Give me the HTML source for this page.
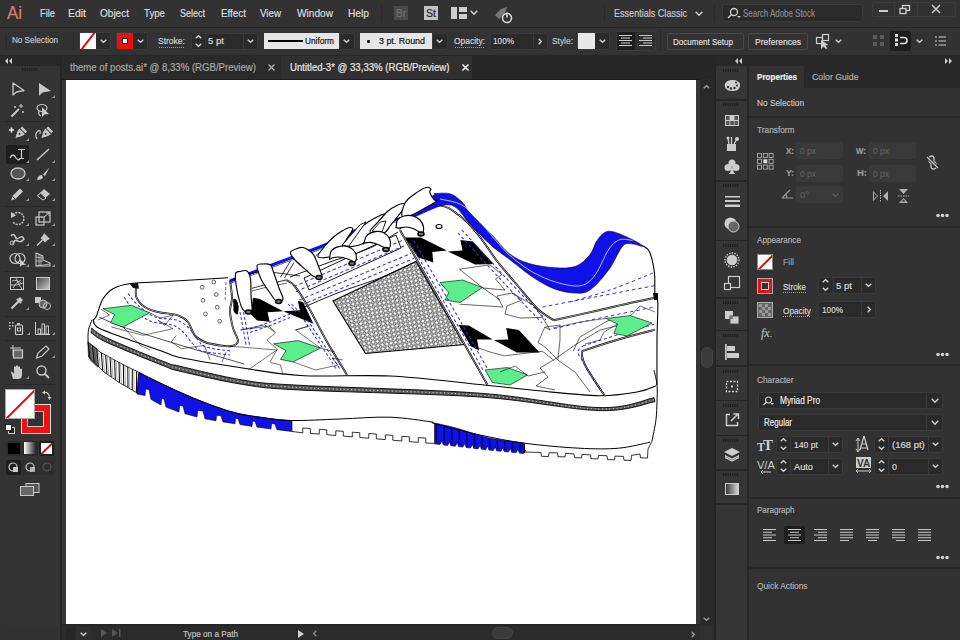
<!DOCTYPE html>
<html><head><meta charset="utf-8">
<style>
*{margin:0;padding:0;box-sizing:border-box}
html,body{width:960px;height:640px;overflow:hidden;background:#323232;font-family:"Liberation Sans",sans-serif;color:#d0d0d0}
.a{position:absolute}
.t{position:absolute;white-space:nowrap;-webkit-text-stroke:0.2px currentColor}
svg{overflow:visible}
</style></head><body>
<div class="a" style="left:0px;top:0px;width:960px;height:27px;background:#323232;"></div>
<div class="a" style="left:0px;top:27px;width:960px;height:1px;background:#262626;"></div>
<div class="t" style="left:7px;top:2.92px;font-size:19px;line-height:19px;color:#d4806a;transform:scaleX(0.888);transform-origin:0 0;">Ai</div>
<div class="t" style="left:40px;top:7.69px;font-size:11px;line-height:11px;color:#dcdcdc;transform:scaleX(0.846);transform-origin:0 0;">File</div>
<div class="t" style="left:68px;top:7.69px;font-size:11px;line-height:11px;color:#dcdcdc;transform:scaleX(0.950);transform-origin:0 0;">Edit</div>
<div class="t" style="left:100px;top:7.69px;font-size:11px;line-height:11px;color:#dcdcdc;transform:scaleX(0.912);transform-origin:0 0;">Object</div>
<div class="t" style="left:144px;top:7.69px;font-size:11px;line-height:11px;color:#dcdcdc;transform:scaleX(0.881);transform-origin:0 0;">Type</div>
<div class="t" style="left:180px;top:7.69px;font-size:11px;line-height:11px;color:#dcdcdc;transform:scaleX(0.818);transform-origin:0 0;">Select</div>
<div class="t" style="left:221px;top:7.69px;font-size:11px;line-height:11px;color:#dcdcdc;transform:scaleX(0.895);transform-origin:0 0;">Effect</div>
<div class="t" style="left:260px;top:7.69px;font-size:11px;line-height:11px;color:#dcdcdc;transform:scaleX(0.888);transform-origin:0 0;">View</div>
<div class="t" style="left:297px;top:7.69px;font-size:11px;line-height:11px;color:#dcdcdc;transform:scaleX(0.920);transform-origin:0 0;">Window</div>
<div class="t" style="left:348px;top:7.69px;font-size:11px;line-height:11px;color:#dcdcdc;transform:scaleX(0.928);transform-origin:0 0;">Help</div>
<div class="a" style="left:381px;top:5px;width:1px;height:17px;background:#2a2a2a;"></div>
<div class="a" style="left:394px;top:6px;width:14px;height:14px;background:#4a4a4a;"></div>
<div class="t" style="left:396px;top:9.04px;font-size:10px;line-height:10px;color:#707070;">Br</div>
<div class="a" style="left:424px;top:6px;width:14px;height:14px;background:#c4c4c4;"></div>
<div class="t" style="left:426px;top:9.04px;font-size:10px;line-height:10px;color:#2a2a2a;transform:scaleX(1.058);transform-origin:0 0;">St</div>
<svg class="a" style="left:451px;top:7px;" width="16" height="12" viewBox="0 0 16 12"><rect x="0" y="0" width="6" height="12" fill="#cfcfcf"/><rect x="8" y="0" width="8" height="5" fill="#cfcfcf"/><rect x="8" y="7" width="8" height="5" fill="#cfcfcf"/></svg>
<svg class="a" style="left:470px;top:10px;" width="8" height="5" viewBox="0 0 8 5"><path d="M0.7 0.7 L4.0 4.3 L7.3 0.7" fill="none" stroke="#cfcfcf" stroke-width="1.4"/></svg>
<svg class="a" style="left:493px;top:4px;" width="20" height="20" viewBox="0 0 20 20"><path d="M2 11 L8 5 L14 3 L12 9 L6 15 Z" fill="#777"/><circle cx="14" cy="14" r="4.5" fill="none" stroke="#d8d8d8" stroke-width="1.6"/><path d="M14 8.5v5" stroke="#d8d8d8" stroke-width="1.6"/></svg>
<div class="a" style="left:604px;top:5px;width:1px;height:17px;background:#2a2a2a;"></div>
<div class="t" style="left:614px;top:7.69px;font-size:11px;line-height:11px;color:#c8c8c8;transform:scaleX(0.824);transform-origin:0 0;">Essentials Classic</div>
<svg class="a" style="left:695px;top:11px;" width="8" height="5" viewBox="0 0 8 5"><path d="M0.7 0.7 L4.0 4.3 L7.3 0.7" fill="none" stroke="#cfcfcf" stroke-width="1.4"/></svg>
<div class="a" style="left:714px;top:5px;width:1px;height:17px;background:#2a2a2a;"></div>
<div class="a" style="left:722px;top:4px;width:141px;height:18px;background:#2a2a2a;border:1px solid #3a3a3a;border-radius:2px;"></div>
<svg class="a" style="left:727px;top:7px;" width="14" height="12" viewBox="0 0 14 12"><circle cx="7" cy="5" r="3.5" fill="none" stroke="#d0d0d0" stroke-width="1.3"/><path d="M4.5 7.5 L1 11" stroke="#d0d0d0" stroke-width="1.5"/><path d="M10 9h4l-2 2z" fill="#d0d0d0"/></svg>
<div class="t" style="left:743px;top:7.69px;font-size:11px;line-height:11px;color:#8a8a8a;transform:scaleX(0.722);transform-origin:0 0;">Search Adobe Stock</div>
<div class="a" style="left:872px;top:2px;width:84px;height:15px;background:#323232;border:1px solid #3c3c3c;border-radius:2px;"></div>
<div class="a" style="left:894px;top:3px;width:1px;height:13px;background:#3c3c3c;"></div>
<div class="a" style="left:917px;top:3px;width:1px;height:13px;background:#3c3c3c;"></div>
<div class="a" style="left:879px;top:10px;width:9px;height:2px;background:#cfcfcf;"></div>
<svg class="a" style="left:899px;top:4px;" width="12" height="11" viewBox="0 0 12 11"><rect x="3.5" y="1.5" width="7" height="5" fill="none" stroke="#cfcfcf" stroke-width="1.3"/><rect x="1" y="4.5" width="6" height="5" fill="#323232" stroke="#cfcfcf" stroke-width="1.3"/></svg>
<svg class="a" style="left:931px;top:4px;" width="11" height="10" viewBox="0 0 11 10"><path d="M1 1L9 9M9 1L1 9" stroke="#cfcfcf" stroke-width="1.5"/></svg>
<div class="a" style="left:0px;top:28px;width:960px;height:27px;background:#323232;"></div>
<div class="a" style="left:0px;top:55px;width:960px;height:1px;background:#262626;"></div>
<div class="a" style="left:5px;top:33px;width:2px;height:16px;background:#2a2a2a;"></div>
<div class="t" style="left:12px;top:35.88px;font-size:9px;line-height:9px;color:#c0c0c0;transform:scaleX(0.901);transform-origin:0 0;">No Selection</div>
<div class="a" style="left:73px;top:32px;width:1px;height:18px;background:#2a2a2a;"></div>
<div class="a" style="left:79px;top:32px;width:32px;height:18px;background:#2b2b2b;border:1px solid #3a3a3a;border-radius:2px;"></div>
<div class="a" style="left:80px;top:33px;width:16px;height:16px;background:#fff;overflow:hidden"><div class="a" style="left:-3px;top:7px;width:22px;height:1.6px;background:#d01010;transform:rotate(-52deg)"></div></div>
<svg class="a" style="left:100px;top:39px;" width="7" height="4" viewBox="0 0 7 4"><path d="M0.7 0.7 L3.5 3.3 L6.3 0.7" fill="none" stroke="#cfcfcf" stroke-width="1.4"/></svg>
<div class="a" style="left:116px;top:32px;width:32px;height:18px;background:#2b2b2b;border:1px solid #3a3a3a;border-radius:2px;"></div>
<div class="a" style="left:117px;top:33px;width:16px;height:16px;background:#e81010;"></div>
<div class="a" style="left:122px;top:38px;width:6px;height:6px;background:#fff;border:1.5px solid #222"></div>
<svg class="a" style="left:137px;top:39px;" width="7" height="4" viewBox="0 0 7 4"><path d="M0.7 0.7 L3.5 3.3 L6.3 0.7" fill="none" stroke="#cfcfcf" stroke-width="1.4"/></svg>
<div class="t" style="left:158px;top:37.21px;font-size:9.2px;line-height:9.2px;color:#d0d0d0;transform:scaleX(0.926);transform-origin:0 0;">Stroke:</div>
<div class="a" style="left:159px;top:47px;width:26px;height:1px;background:;background-image:repeating-linear-gradient(90deg,#9a9a9a 0 1px,transparent 1px 2px)"></div>
<div class="a" style="left:191px;top:33px;width:67px;height:17px;background:#2a2a2a;border:1px solid #3a3a3a;border-radius:2px;"></div>
<div class="a" style="left:205px;top:34px;width:1px;height:15px;background:#3a3a3a;"></div>
<div class="a" style="left:243px;top:34px;width:1px;height:15px;background:#3a3a3a;"></div>
<svg class="a" style="left:195px;top:35px;" width="7" height="4" viewBox="0 0 7 4"><path d="M0.7 3.3 L3.5 0.7 L6.3 3.3" fill="none" stroke="#cfcfcf" stroke-width="1.4"/></svg>
<svg class="a" style="left:195px;top:43px;" width="7" height="4" viewBox="0 0 7 4"><path d="M0.7 0.7 L3.5 3.3 L6.3 0.7" fill="none" stroke="#cfcfcf" stroke-width="1.4"/></svg>
<div class="t" style="left:208px;top:35.96px;font-size:9.5px;line-height:9.5px;color:#d8d8d8;">5 pt</div>
<svg class="a" style="left:247px;top:39px;" width="7" height="4" viewBox="0 0 7 4"><path d="M0.7 0.7 L3.5 3.3 L6.3 0.7" fill="none" stroke="#cfcfcf" stroke-width="1.4"/></svg>
<div class="a" style="left:264px;top:33px;width:75px;height:16px;background:#e6e6e6;"></div>
<div class="a" style="left:268px;top:40px;width:35px;height:2px;background:#000;"></div>
<div class="t" style="left:305px;top:36.46px;font-size:9.5px;line-height:9.5px;color:#111;transform:scaleX(0.872);transform-origin:0 0;">Uniform</div>
<div class="a" style="left:339px;top:33px;width:16px;height:17px;background:#2a2a2a;border:1px solid #3a3a3a;border-radius:2px;"></div>
<svg class="a" style="left:343px;top:39px;" width="7" height="4" viewBox="0 0 7 4"><path d="M0.7 0.7 L3.5 3.3 L6.3 0.7" fill="none" stroke="#cfcfcf" stroke-width="1.4"/></svg>
<div class="a" style="left:360px;top:33px;width:72px;height:16px;background:#e6e6e6;"></div>
<div class="a" style="left:367px;top:40px;width:2.5px;height:2.5px;background:#111;border-radius:50%"></div>
<div class="t" style="left:379px;top:36.46px;font-size:9.5px;line-height:9.5px;color:#111;transform:scaleX(0.936);transform-origin:0 0;">3 pt. Round</div>
<div class="a" style="left:432px;top:33px;width:16px;height:17px;background:#2a2a2a;border:1px solid #3a3a3a;border-radius:2px;"></div>
<svg class="a" style="left:436px;top:39px;" width="7" height="4" viewBox="0 0 7 4"><path d="M0.7 0.7 L3.5 3.3 L6.3 0.7" fill="none" stroke="#cfcfcf" stroke-width="1.4"/></svg>
<div class="t" style="left:454px;top:37.21px;font-size:9.2px;line-height:9.2px;color:#d0d0d0;transform:scaleX(0.919);transform-origin:0 0;">Opacity:</div>
<div class="a" style="left:455px;top:47px;width:30px;height:1px;background:;background-image:repeating-linear-gradient(90deg,#9a9a9a 0 1px,transparent 1px 2px)"></div>
<div class="a" style="left:490px;top:33px;width:58px;height:17px;background:#2a2a2a;border:1px solid #3a3a3a;border-radius:2px;"></div>
<div class="a" style="left:533px;top:34px;width:1px;height:15px;background:#3a3a3a;"></div>
<div class="t" style="left:493px;top:35.96px;font-size:9.5px;line-height:9.5px;color:#d8d8d8;transform:scaleX(0.864);transform-origin:0 0;">100%</div>
<svg class="a" style="left:538px;top:38px;" width="4" height="7" viewBox="0 0 4 7"><path d="M0.7 0.7 L3.3 3.5 L0.7 6.3" fill="none" stroke="#cfcfcf" stroke-width="1.4"/></svg>
<div class="t" style="left:552px;top:37.21px;font-size:9.2px;line-height:9.2px;color:#c0c0c0;transform:scaleX(0.913);transform-origin:0 0;">Style:</div>
<div class="a" style="left:577px;top:32px;width:33px;height:18px;background:#2a2a2a;border:1px solid #3a3a3a;border-radius:2px;"></div>
<div class="a" style="left:578px;top:33px;width:17px;height:16px;background:#e8e8e8;"></div>
<svg class="a" style="left:599px;top:39px;" width="7" height="4" viewBox="0 0 7 4"><path d="M0.7 0.7 L3.5 3.3 L6.3 0.7" fill="none" stroke="#cfcfcf" stroke-width="1.4"/></svg>
<div class="a" style="left:616px;top:31px;width:40px;height:20px;background:#2e2e2e;border:1px solid #3a3a3a;border-radius:2px;"></div>
<div class="a" style="left:617px;top:32px;width:18px;height:18px;background:#1e1e1e;"></div>
<svg class="a" style="left:619px;top:35px;" width="14" height="12" viewBox="0 0 14 12"><g stroke="#d0d0d0" stroke-width="1"><path d="M0 .5h13M2 3h9M0 5.5h13M2 8h9M0 10.5h13"/></g></svg>
<svg class="a" style="left:639px;top:35px;" width="14" height="12" viewBox="0 0 14 12"><g stroke="#c8c8c8" stroke-width="1"><path d="M0 .5h13M4 3h9M0 5.5h13M4 8h9M0 10.5h13"/></g></svg>
<div class="a" style="left:660px;top:30px;width:1px;height:22px;background:#2a2a2a;"></div>
<div class="a" style="left:667px;top:33px;width:77px;height:17px;background:#323232;border:1px solid #484848;border-radius:2px;"></div>
<div class="t" style="left:673px;top:36.96px;font-size:9.5px;line-height:9.5px;color:#dedede;transform:scaleX(0.848);transform-origin:0 0;">Document Setup</div>
<div class="a" style="left:748px;top:33px;width:60px;height:17px;background:#323232;border:1px solid #484848;border-radius:2px;"></div>
<div class="t" style="left:755px;top:36.96px;font-size:9.5px;line-height:9.5px;color:#dedede;transform:scaleX(0.898);transform-origin:0 0;">Preferences</div>
<svg class="a" style="left:815px;top:33px;" width="17" height="17" viewBox="0 0 17 17"><rect x="1.5" y="4.5" width="6" height="6" fill="none" stroke="#cfcfcf" stroke-width="1.2"/><rect x="7.5" y="1.5" width="6" height="6" fill="none" stroke="#cfcfcf" stroke-width="1.2"/><path d="M6 7 L6 16 L8.5 13.5 L11 16 L12.5 15 L10 12.5 L13.5 12 Z" fill="#cfcfcf"/></svg>
<svg class="a" style="left:835px;top:39px;" width="7" height="4" viewBox="0 0 7 4"><path d="M0.7 0.7 L3.5 3.3 L6.3 0.7" fill="none" stroke="#cfcfcf" stroke-width="1.4"/></svg>
<svg class="a" style="left:873px;top:35px;" width="12" height="12" viewBox="0 0 12 12"><g fill="#5a5a5a"><rect x="0" y="0" width="4" height="4"/><rect x="7" y="0" width="4" height="4"/><rect x="0" y="7" width="4" height="4"/><rect x="7" y="7" width="4" height="4"/></g></svg>
<div class="a" style="left:890px;top:31px;width:21px;height:20px;background:#1e1e1e;border-radius:2px"></div>
<svg class="a" style="left:895px;top:34px;" width="14" height="14" viewBox="0 0 14 14"><rect x="0" y="0" width="3" height="3" fill="#e0e0e0"/><rect x="0" y="4.5" width="3" height="3" fill="#e0e0e0"/><rect x="0" y="9" width="3" height="3" fill="#e0e0e0"/><path d="M5 3.5h4a3 3 0 0 1 0 6h-4" fill="none" stroke="#e0e0e0" stroke-width="1.6"/></svg>
<svg class="a" style="left:916px;top:39px;" width="7" height="4" viewBox="0 0 7 4"><path d="M0.7 0.7 L3.5 3.3 L6.3 0.7" fill="none" stroke="#cfcfcf" stroke-width="1.4"/></svg>
<svg class="a" style="left:935px;top:36px;" width="11" height="10" viewBox="0 0 11 10"><g stroke="#cfcfcf" stroke-width="1.2"><path d="M0 1h2M3.5 1h7.5M0 5h2M3.5 5h7.5M0 9h2M3.5 9h7.5"/></g></svg>
<div class="a" style="left:0px;top:56px;width:60px;height:10px;background:#282828;"></div>
<div class="a" style="left:0px;top:66px;width:60px;height:574px;background:#323232;"></div>
<div class="a" style="left:60px;top:56px;width:2px;height:584px;background:#262626;"></div>
<div class="a" style="left:62px;top:56px;width:652px;height:23px;background:#262626;"></div>
<div class="a" style="left:62px;top:56px;width:219px;height:23px;background:#2a2a2a;"></div>
<div class="a" style="left:281px;top:56px;width:191px;height:23px;background:#323232;"></div>
<div class="a" style="left:62px;top:79px;width:652px;height:547px;background:#282828;"></div>
<div class="a" style="left:62px;top:79px;width:638px;height:545px;background:#363636;"></div>
<div class="a" style="left:62px;top:79px;width:638px;height:1px;background:#1e1e1e;"></div>
<div class="a" style="left:66px;top:80px;width:630px;height:544px;background:#ffffff;"></div>
<div class="a" style="left:700px;top:79px;width:13px;height:547px;background:#292929;"></div>
<div class="a" style="left:62px;top:626px;width:652px;height:14px;background:#2b2b2b;"></div>
<div class="a" style="left:714px;top:56px;width:246px;height:10px;background:#282828;"></div>
<div class="a" style="left:714px;top:66px;width:2px;height:574px;background:#262626;"></div>
<div class="a" style="left:716px;top:66px;width:31px;height:574px;background:#323232;"></div>
<div class="a" style="left:747px;top:66px;width:2px;height:574px;background:#262626;"></div>
<div class="a" style="left:749px;top:66px;width:211px;height:574px;background:#323232;"></div>
<div class="a" style="left:281px;top:56px;width:191px;height:23px;background:#303030;"></div>
<div class="t" style="left:70px;top:63.28px;font-size:10.3px;line-height:10.3px;color:#a8a8a8;transform:scaleX(0.933);transform-origin:0 0;">theme of posts.ai* @ 8,33% (RGB/Preview)</div>
<svg class="a" style="left:268px;top:64px;" width="7" height="7" viewBox="0 0 7 7"><path d="M.5 .5l6 6M6.5 .5l-6 6" stroke="#b0b0b0" stroke-width="1.3"/></svg>
<div class="t" style="left:289.5px;top:63.28px;font-size:10.3px;line-height:10.3px;color:#e8e8e8;transform:scaleX(0.934);transform-origin:0 0;">Untitled-3* @ 33,33% (RGB/Preview)</div>
<svg class="a" style="left:462px;top:64px;" width="7" height="7" viewBox="0 0 7 7"><path d="M.5 .5l6 6M6.5 .5l-6 6" stroke="#f0f0f0" stroke-width="1.6"/></svg>
<svg class="a" style="left:5px;top:58px;" width="7" height="6" viewBox="0 0 7 6"><path d="M3 0L0 3L3 6ZM7 0L4 3L7 6Z" fill="#cfcfcf"/></svg>
<div class="a" style="left:1px;top:66px;width:58px;height:560px;background:#333333;"></div>
<svg class="a" style="left:22px;top:68px;" width="16" height="3" viewBox="0 0 16 3"><g fill="#1e1e1e"><rect x="0.0" y="0" width="1.2" height="3"/><rect x="2.3" y="0" width="1.2" height="3"/><rect x="4.6" y="0" width="1.2" height="3"/><rect x="6.9" y="0" width="1.2" height="3"/><rect x="9.2" y="0" width="1.2" height="3"/><rect x="11.5" y="0" width="1.2" height="3"/><rect x="13.8" y="0" width="1.2" height="3"/></g></svg>
<svg class="a" style="left:12px;top:82px;" width="13" height="15" viewBox="0 0 13 15"><path d="M1 1 L1 13 L4.5 10 L12 8.5 Z" fill="none" stroke="#c8c8c8" stroke-width="1.3" stroke-linejoin="round"/></svg>
<svg class="a" style="left:38px;top:82px;" width="14" height="15" viewBox="0 0 14 15"><path d="M1 1 L1 14 L4.5 10.5 L13 9 Z" fill="#c8c8c8"/></svg>
<svg class="a" style="left:52px;top:95px;" width="3" height="3" viewBox="0 0 3 3"><path d="M3 0V3H0Z" fill="#9a9a9a"/></svg>
<svg class="a" style="left:10px;top:103px;" width="15" height="15" viewBox="0 0 15 15"><path d="M1.5 13.5 L9 6" stroke="#c8c8c8" stroke-width="2"/><path d="M11 1v4M9 3h4M5 3v2M4 4h2M13 8v2M12 9h2" stroke="#c8c8c8" stroke-width="1"/></svg>
<svg class="a" style="left:36px;top:103px;" width="15" height="15" viewBox="0 0 15 15"><ellipse cx="6" cy="5" rx="5" ry="3.5" fill="none" stroke="#c8c8c8" stroke-width="1.2"/><path d="M3 8 q-1 4 2 5" fill="none" stroke="#c8c8c8" stroke-width="1.2"/><path d="M6 4 L6 14 L8.5 11.5 L13 11 Z" fill="#c8c8c8"/></svg>
<div class="a" style="left:5px;top:121px;width:50px;height:1px;background:#282828;"></div>
<svg class="a" style="left:8px;top:126px;" width="19" height="16" viewBox="0 0 19 16"><path d="M1 4h5M3.5 1.5v5" stroke="#e8e8e8" stroke-width="1.6"/><g transform="translate(12 7.5) rotate(45)"><path d="M-3.5 -6.5 h7 v2.5 h-7z" fill="#c8c8c8"/><path d="M-4 -3 h8 l-1 4 l-3 5.5 l-3 -5.5z" fill="#c8c8c8"/><circle cx="0" cy="0.5" r="1" fill="#333"/></g></svg>
<svg class="a" style="left:26px;top:138px;" width="3" height="3" viewBox="0 0 3 3"><path d="M3 0V3H0Z" fill="#9a9a9a"/></svg>
<svg class="a" style="left:34px;top:126px;" width="19" height="16" viewBox="0 0 19 16"><path d="M3 13 q-3 -5 1 -8 q3 -2 2 3" fill="none" stroke="#c8c8c8" stroke-width="1.2"/><g transform="translate(12 7.5) rotate(45)"><path d="M-3.5 -6.5 h7 v2.5 h-7z" fill="#c8c8c8"/><path d="M-4 -3 h8 l-1 4 l-3 5.5 l-3 -5.5z" fill="#c8c8c8"/><circle cx="0" cy="0.5" r="1" fill="#333"/></g></svg>
<div class="a" style="left:6px;top:145px;width:23px;height:19px;background:#1e1e1e;border-radius:2px"></div>
<svg class="a" style="left:9px;top:148px;" width="17" height="13" viewBox="0 0 17 13"><path d="M1 10 q3 -6 6 0 q2 3 4 1" fill="none" stroke="#c8c8c8" stroke-width="1.3"/><path d="M9 1.5h7M12.5 1.5v9M10 10.5h5" stroke="#c8c8c8" stroke-width="1.2"/></svg>
<svg class="a" style="left:26px;top:160px;" width="3" height="3" viewBox="0 0 3 3"><path d="M3 0V3H0Z" fill="#9a9a9a"/></svg>
<svg class="a" style="left:36px;top:148px;" width="14" height="13" viewBox="0 0 14 13"><path d="M1 12 L13 1" stroke="#c8c8c8" stroke-width="1.5"/></svg>
<svg class="a" style="left:52px;top:160px;" width="3" height="3" viewBox="0 0 3 3"><path d="M3 0V3H0Z" fill="#9a9a9a"/></svg>
<svg class="a" style="left:10px;top:167px;" width="16" height="13" viewBox="0 0 16 13"><ellipse cx="8" cy="6.5" rx="7" ry="5.5" fill="#555" stroke="#c8c8c8" stroke-width="1.3"/></svg>
<svg class="a" style="left:26px;top:178px;" width="3" height="3" viewBox="0 0 3 3"><path d="M3 0V3H0Z" fill="#9a9a9a"/></svg>
<svg class="a" style="left:36px;top:167px;" width="15" height="14" viewBox="0 0 15 14"><path d="M13.5 .5 L7 7.5 L9 9 Z" fill="#c8c8c8"/><path d="M6 8 q-4 0 -5 5 q4 0 6 -2 z" fill="#c8c8c8"/></svg>
<svg class="a" style="left:52px;top:178px;" width="3" height="3" viewBox="0 0 3 3"><path d="M3 0V3H0Z" fill="#9a9a9a"/></svg>
<svg class="a" style="left:10px;top:187px;" width="15" height="14" viewBox="0 0 15 14"><path d="M1 13.5 L2.5 9 L10 1.5 L13 4.5 L5.5 12 Z" fill="#c8c8c8"/><path d="M2.5 9.5l3 3" stroke="#333" stroke-width="1"/></svg>
<svg class="a" style="left:26px;top:198px;" width="3" height="3" viewBox="0 0 3 3"><path d="M3 0V3H0Z" fill="#9a9a9a"/></svg>
<svg class="a" style="left:36px;top:187px;" width="15" height="14" viewBox="0 0 15 14"><path d="M1 9 L8 2 L14 7 L7 13 Z" fill="#c8c8c8"/><path d="M1.5 9 L4.5 6 L10 11 L7 13Z" fill="#333" stroke="#c8c8c8" stroke-width="1"/></svg>
<svg class="a" style="left:52px;top:198px;" width="3" height="3" viewBox="0 0 3 3"><path d="M3 0V3H0Z" fill="#9a9a9a"/></svg>
<div class="a" style="left:5px;top:206px;width:50px;height:1px;background:#282828;"></div>
<svg class="a" style="left:10px;top:211px;" width="15" height="15" viewBox="0 0 15 15"><path d="M3 4 A6 6 0 1 1 3 11" fill="none" stroke="#c8c8c8" stroke-width="1.4" stroke-dasharray="2 1"/><path d="M1 1 L6 4.5 L1 7Z" fill="#c8c8c8"/></svg>
<svg class="a" style="left:26px;top:223px;" width="3" height="3" viewBox="0 0 3 3"><path d="M3 0V3H0Z" fill="#9a9a9a"/></svg>
<svg class="a" style="left:35px;top:211px;" width="16" height="15" viewBox="0 0 16 15"><rect x="1" y="6" width="8" height="8" fill="none" stroke="#c8c8c8" stroke-width="1.2"/><rect x="4" y="1" width="11" height="10" fill="none" stroke="#c8c8c8" stroke-width="1.2"/><path d="M9 6L14 2M11 2h3v3" stroke="#c8c8c8" stroke-width="1"/></svg>
<svg class="a" style="left:52px;top:223px;" width="3" height="3" viewBox="0 0 3 3"><path d="M3 0V3H0Z" fill="#9a9a9a"/></svg>
<svg class="a" style="left:9px;top:232px;" width="17" height="14" viewBox="0 0 17 14"><path d="M2 4 q2 -3 4 0 q1 4 4 2 q3 -3 5 1 q-3 4 -6 2 q-4 -2 -5 3" fill="none" stroke="#c8c8c8" stroke-width="1.5"/><circle cx="3" cy="11" r="2" fill="none" stroke="#c8c8c8"/></svg>
<svg class="a" style="left:26px;top:243px;" width="3" height="3" viewBox="0 0 3 3"><path d="M3 0V3H0Z" fill="#9a9a9a"/></svg>
<svg class="a" style="left:36px;top:232px;" width="15" height="14" viewBox="0 0 15 14"><path d="M8 1 L14 7 L11.5 8 L9 10.5 L4.5 6 L7 3.5 Z" fill="#c8c8c8"/><path d="M6.5 8 L1 13.5" stroke="#c8c8c8" stroke-width="1.5"/></svg>
<svg class="a" style="left:52px;top:243px;" width="3" height="3" viewBox="0 0 3 3"><path d="M3 0V3H0Z" fill="#9a9a9a"/></svg>
<svg class="a" style="left:9px;top:252px;" width="18" height="15" viewBox="0 0 18 15"><circle cx="6" cy="6.5" r="5" fill="none" stroke="#c8c8c8" stroke-width="1.2"/><circle cx="11" cy="6.5" r="5" fill="none" stroke="#c8c8c8" stroke-width="1.2"/><path d="M11 7 L11 15 L13 13 L17 13Z" fill="#c8c8c8"/></svg>
<svg class="a" style="left:26px;top:264px;" width="3" height="3" viewBox="0 0 3 3"><path d="M3 0V3H0Z" fill="#9a9a9a"/></svg>
<svg class="a" style="left:35px;top:252px;" width="16" height="15" viewBox="0 0 16 15"><path d="M1 1 L1 14 L15 14 L15 11 L8 8 L8 4 Z" fill="none" stroke="#c8c8c8" stroke-width="1.1"/><path d="M1 5L8 6M1 9L8 9M4 1.5V14M6 3V14M1 14L15 12" stroke="#c8c8c8" stroke-width=".8"/></svg>
<svg class="a" style="left:52px;top:264px;" width="3" height="3" viewBox="0 0 3 3"><path d="M3 0V3H0Z" fill="#9a9a9a"/></svg>
<div class="a" style="left:5px;top:271px;width:50px;height:1px;background:#282828;"></div>
<svg class="a" style="left:10px;top:277px;" width="14" height="13" viewBox="0 0 14 13"><rect x=".5" y=".5" width="13" height="12" fill="none" stroke="#c8c8c8" stroke-width="1"/><path d="M2 4 q5 -2 10 3M3 11 q3 -6 8 -8M6 1 q2 6 6 11M1 8 q5 1 12 -2" fill="none" stroke="#c8c8c8" stroke-width=".9"/></svg>
<svg class="a" style="left:36px;top:277px;" width="14" height="13" viewBox="0 0 14 13"><defs><linearGradient id="gg" x1="0" x2="1" y1="0" y2="1"><stop offset="0" stop-color="#444"/><stop offset="1" stop-color="#ccc"/></linearGradient></defs><rect x=".5" y=".5" width="13" height="12" fill="url(#gg)" stroke="#c8c8c8" stroke-width="1"/></svg>
<svg class="a" style="left:10px;top:296px;" width="14" height="14" viewBox="0 0 14 14"><path d="M1.5 12.5 L9 5 M7 3 L11 7" stroke="#c8c8c8" stroke-width="2.2"/><path d="M10 1 L13 4 L11 6 L8 3Z" fill="#c8c8c8"/></svg>
<svg class="a" style="left:26px;top:307px;" width="3" height="3" viewBox="0 0 3 3"><path d="M3 0V3H0Z" fill="#9a9a9a"/></svg>
<svg class="a" style="left:34px;top:296px;" width="17" height="14" viewBox="0 0 17 14"><rect x="1" y="1" width="6" height="6" fill="#c8c8c8"/><circle cx="9" cy="8" r="4" fill="#666" stroke="#c8c8c8"/><circle cx="13" cy="10" r="3.5" fill="none" stroke="#c8c8c8"/></svg>
<div class="a" style="left:5px;top:316px;width:50px;height:1px;background:#282828;"></div>
<svg class="a" style="left:8px;top:321px;" width="19" height="14" viewBox="0 0 19 14"><g fill="#c8c8c8"><rect x="1" y="1" width="1.5" height="1.5"/><rect x="4" y="1" width="1.5" height="1.5"/><rect x="1" y="4" width="1.5" height="1.5"/><rect x="4" y="4" width="1.5" height="1.5"/><rect x="1" y="7" width="1.5" height="1.5"/></g><rect x="9" y="2" width="3" height="2" fill="#c8c8c8"/><rect x="7.5" y="4" width="7" height="9.5" rx="1" fill="none" stroke="#c8c8c8" stroke-width="1.2"/><rect x="9.5" y="7" width="3" height="3" fill="none" stroke="#c8c8c8"/></svg>
<svg class="a" style="left:27px;top:332px;" width="3" height="3" viewBox="0 0 3 3"><path d="M3 0V3H0Z" fill="#9a9a9a"/></svg>
<svg class="a" style="left:35px;top:321px;" width="16" height="14" viewBox="0 0 16 14"><path d="M.5 1 V13.5 H15" fill="none" stroke="#c8c8c8" stroke-width="1"/><rect x="3" y="8" width="2.5" height="5" fill="none" stroke="#c8c8c8"/><rect x="7" y="3" width="2.5" height="10" fill="none" stroke="#c8c8c8"/><rect x="11" y="5" width="2.5" height="8" fill="none" stroke="#c8c8c8"/></svg>
<svg class="a" style="left:52px;top:332px;" width="3" height="3" viewBox="0 0 3 3"><path d="M3 0V3H0Z" fill="#9a9a9a"/></svg>
<div class="a" style="left:5px;top:340px;width:50px;height:1px;background:#282828;"></div>
<svg class="a" style="left:9px;top:345px;" width="16" height="14" viewBox="0 0 16 14"><path d="M1 3h11M4 0v11" stroke="#c8c8c8" stroke-width="1"/><rect x="4.5" y="5" width="9" height="8" fill="#666" stroke="#c8c8c8" stroke-width="1.2"/></svg>
<svg class="a" style="left:35px;top:345px;" width="16" height="14" viewBox="0 0 16 14"><path d="M1.5 13 L3 8 L11 1 L14 4 L7 11 Z" fill="none" stroke="#c8c8c8" stroke-width="1.2"/></svg>
<svg class="a" style="left:52px;top:355px;" width="3" height="3" viewBox="0 0 3 3"><path d="M3 0V3H0Z" fill="#9a9a9a"/></svg>
<svg class="a" style="left:10px;top:365px;" width="15" height="15" viewBox="0 0 15 15"><path d="M3 14 L1 7 q0-1 1.5 0 L4 9 V2 q1-1.5 2 0 V7 V1 q1-1.5 2 0 V7 V2 q1-1.5 2 0 V8 V4 q1-1 2 0 V10 q0 4 -4 4 Z" fill="#c8c8c8"/></svg>
<svg class="a" style="left:26px;top:376px;" width="3" height="3" viewBox="0 0 3 3"><path d="M3 0V3H0Z" fill="#9a9a9a"/></svg>
<svg class="a" style="left:36px;top:365px;" width="14" height="15" viewBox="0 0 14 15"><circle cx="5.5" cy="5.5" r="4.5" fill="none" stroke="#c8c8c8" stroke-width="1.4"/><path d="M8.5 8.5 L13 13" stroke="#c8c8c8" stroke-width="2"/></svg>
<div class="a" style="left:5px;top:384px;width:50px;height:1px;background:#282828;"></div>
<div class="a" style="left:21px;top:404px;width:30px;height:30px;background:#ee1111;border:1px solid #ddd"></div>
<div class="a" style="left:27px;top:411px;width:17px;height:16px;background:#323232;border:1px solid #ccc"></div>
<div class="a" style="left:5px;top:389px;width:30px;height:30px;background:#fff;border:1px solid #aaa;overflow:hidden"><div class="a" style="left:-6px;top:13px;width:42px;height:2px;background:#d81010;transform:rotate(-45deg)"></div></div>
<svg class="a" style="left:42px;top:390px;" width="10" height="10" viewBox="0 0 10 10"><path d="M1.5 2.5 q6 -1 6 6" fill="none" stroke="#c8c8c8" stroke-width="1.2"/><path d="M0 2.5 L3 0.5 V4.5Z M5.5 7 L9.5 7 L7.5 10Z" fill="#c8c8c8"/></svg>
<svg class="a" style="left:5px;top:424px;" width="11" height="10" viewBox="0 0 11 10"><rect x="3.5" y="3.5" width="6" height="6" fill="#222" stroke="#c8c8c8"/><rect x=".5" y=".5" width="6" height="6" fill="#fff" stroke="#222"/></svg>
<div class="a" style="left:6px;top:441px;width:15px;height:15px;background:#2a2a2a;border-radius:2px"></div>
<div class="a" style="left:7.5px;top:443px;width:12px;height:11px;background:#000;"></div>
<div class="a" style="left:22px;top:441px;width:16px;height:15px;background:#2a2a2a;border-radius:2px"></div>
<svg class="a" style="left:24px;top:442px;" width="12" height="12" viewBox="0 0 12 12"><defs><linearGradient id="g2" x1="0" x2="1"><stop offset="0" stop-color="#fff"/><stop offset="1" stop-color="#222"/></linearGradient></defs><rect x="0" y="0" width="12" height="12" fill="url(#g2)"/></svg>
<div class="a" style="left:39px;top:441px;width:15px;height:15px;background:#1e1e1e;border-radius:2px"></div>
<div class="a" style="left:41px;top:443px;width:11px;height:11px;background:#fff;overflow:hidden"><div class="a" style="left:-3px;top:4.5px;width:17px;height:2px;background:#d81010;transform:rotate(-45deg)"></div></div>
<div class="a" style="left:6px;top:460px;width:15px;height:15px;background:#1e1e1e;border-radius:2px"></div>
<div class="a" style="left:22px;top:460px;width:16px;height:15px;background:#2e2e2e;"></div>
<div class="a" style="left:39px;top:460px;width:15px;height:15px;background:#2e2e2e;"></div>
<svg class="a" style="left:8px;top:462px;" width="11" height="11" viewBox="0 0 11 11"><circle cx="5" cy="5" r="4" fill="none" stroke="#c8c8c8" stroke-width="1.2"/><rect x="5" y="5" width="5" height="5" fill="#c8c8c8"/></svg>
<svg class="a" style="left:25px;top:462px;" width="11" height="11" viewBox="0 0 11 11"><circle cx="5" cy="5" r="4" fill="none" stroke="#c8c8c8" stroke-width="1.2"/><rect x="5" y="5" width="5" height="5" fill="#c8c8c8" opacity=".8"/></svg>
<svg class="a" style="left:42px;top:462px;" width="11" height="11" viewBox="0 0 11 11"><circle cx="5" cy="5" r="4" fill="none" stroke="#555" stroke-width="1.2"/></svg>
<svg class="a" style="left:20px;top:483px;" width="20" height="13" viewBox="0 0 20 13"><rect x="6" y=".5" width="13" height="9" fill="#555" stroke="#c8c8c8"/><rect x=".5" y="3.5" width="13" height="9" fill="#666" stroke="#c8c8c8"/></svg>
<div class="a" style="left:62px;top:624px;width:638px;height:2px;background:#262626;"></div>
<div class="a" style="left:66px;top:627px;width:9px;height:13px;background:#262626;"></div>
<div class="a" style="left:76px;top:627px;width:15px;height:13px;background:#2f2f2f;"></div>
<svg class="a" style="left:80px;top:632px;" width="7" height="4" viewBox="0 0 7 4"><path d="M0.7 0.7 L3.5 3.3 L6.3 0.7" fill="none" stroke="#d0d0d0" stroke-width="1.4"/></svg>
<svg class="a" style="left:101px;top:629px;" width="6" height="8" viewBox="0 0 6 8"><path d="M0 0L6 4L0 8Z" fill="#555"/></svg>
<svg class="a" style="left:112px;top:629px;" width="9" height="8" viewBox="0 0 9 8"><path d="M0 0L6 4L0 8Z" fill="#555"/><rect x="7" y="0" width="1.5" height="8" fill="#555"/></svg>
<div class="a" style="left:126px;top:627px;width:1px;height:13px;background:#262626;"></div>
<div class="t" style="left:183px;top:628.96px;font-size:9.5px;line-height:9.5px;color:#c0c0c0;transform:scaleX(0.861);transform-origin:0 0;">Type on a Path</div>
<div class="a" style="left:296px;top:627px;width:1px;height:13px;background:#262626;"></div>
<svg class="a" style="left:298px;top:630px;" width="6" height="8" viewBox="0 0 6 8"><path d="M0 0L6 4L0 8Z" fill="#d0d0d0"/></svg>
<svg class="a" style="left:313px;top:630px;" width="4" height="7" viewBox="0 0 4 7"><path d="M3.3 0.7 L0.7 3.5 L3.3 6.3" fill="none" stroke="#888" stroke-width="1.4"/></svg>
<div class="a" style="left:492px;top:627px;width:21px;height:12px;background:#3b3b3b;border-radius:6px;border:1px solid #454545"></div>
<svg class="a" style="left:691px;top:631px;" width="4" height="7" viewBox="0 0 4 7"><path d="M0.7 0.7 L3.3 3.5 L0.7 6.3" fill="none" stroke="#999" stroke-width="1.4"/></svg>
<div class="a" style="left:700px;top:626px;width:12px;height:14px;background:#303030;"></div>
<svg class="a" style="left:703px;top:85px;" width="7" height="4" viewBox="0 0 7 4"><path d="M0.7 3.3 L3.5 0.7 L6.3 3.3" fill="none" stroke="#999" stroke-width="1.4"/></svg>
<svg class="a" style="left:703px;top:617px;" width="7" height="4" viewBox="0 0 7 4"><path d="M0.7 0.7 L3.5 3.3 L6.3 0.7" fill="none" stroke="#999" stroke-width="1.4"/></svg>
<div class="a" style="left:701px;top:347px;width:12px;height:21px;background:#3b3b3b;border-radius:6px;border:1px solid #454545"></div>
<svg class="a" style="left:735px;top:58px;" width="7" height="6" viewBox="0 0 7 6"><path d="M3 0L0 3L3 6ZM7 0L4 3L7 6Z" fill="#cfcfcf"/></svg>
<svg class="a" style="left:945px;top:58px;" width="7" height="6" viewBox="0 0 7 6"><path d="M4 0L7 3L4 6ZM0 0L3 3L0 6Z" fill="#cfcfcf"/></svg>
<div class="a" style="left:715px;top:66px;width:1px;height:574px;background:#232323;"></div>
<div class="a" style="left:716px;top:66px;width:31px;height:33px;background:#353535;"></div>
<svg class="a" style="left:723px;top:69px;" width="16" height="3" viewBox="0 0 16 3"><g fill="#1e1e1e"><rect x="0.0" y="0" width="1.2" height="3"/><rect x="2.3" y="0" width="1.2" height="3"/><rect x="4.6" y="0" width="1.2" height="3"/><rect x="6.9" y="0" width="1.2" height="3"/><rect x="9.2" y="0" width="1.2" height="3"/><rect x="11.5" y="0" width="1.2" height="3"/><rect x="13.8" y="0" width="1.2" height="3"/></g></svg>
<div class="a" style="left:716px;top:100px;width:31px;height:80px;background:#353535;"></div>
<svg class="a" style="left:723px;top:103px;" width="16" height="3" viewBox="0 0 16 3"><g fill="#1e1e1e"><rect x="0.0" y="0" width="1.2" height="3"/><rect x="2.3" y="0" width="1.2" height="3"/><rect x="4.6" y="0" width="1.2" height="3"/><rect x="6.9" y="0" width="1.2" height="3"/><rect x="9.2" y="0" width="1.2" height="3"/><rect x="11.5" y="0" width="1.2" height="3"/><rect x="13.8" y="0" width="1.2" height="3"/></g></svg>
<div class="a" style="left:716px;top:181px;width:31px;height:58.5px;background:#353535;"></div>
<svg class="a" style="left:723px;top:184px;" width="16" height="3" viewBox="0 0 16 3"><g fill="#1e1e1e"><rect x="0.0" y="0" width="1.2" height="3"/><rect x="2.3" y="0" width="1.2" height="3"/><rect x="4.6" y="0" width="1.2" height="3"/><rect x="6.9" y="0" width="1.2" height="3"/><rect x="9.2" y="0" width="1.2" height="3"/><rect x="11.5" y="0" width="1.2" height="3"/><rect x="13.8" y="0" width="1.2" height="3"/></g></svg>
<div class="a" style="left:716px;top:241px;width:31px;height:56px;background:#353535;"></div>
<svg class="a" style="left:723px;top:244px;" width="16" height="3" viewBox="0 0 16 3"><g fill="#1e1e1e"><rect x="0.0" y="0" width="1.2" height="3"/><rect x="2.3" y="0" width="1.2" height="3"/><rect x="4.6" y="0" width="1.2" height="3"/><rect x="6.9" y="0" width="1.2" height="3"/><rect x="9.2" y="0" width="1.2" height="3"/><rect x="11.5" y="0" width="1.2" height="3"/><rect x="13.8" y="0" width="1.2" height="3"/></g></svg>
<div class="a" style="left:716px;top:298px;width:31px;height:31.5px;background:#353535;"></div>
<svg class="a" style="left:723px;top:301px;" width="16" height="3" viewBox="0 0 16 3"><g fill="#1e1e1e"><rect x="0.0" y="0" width="1.2" height="3"/><rect x="2.3" y="0" width="1.2" height="3"/><rect x="4.6" y="0" width="1.2" height="3"/><rect x="6.9" y="0" width="1.2" height="3"/><rect x="9.2" y="0" width="1.2" height="3"/><rect x="11.5" y="0" width="1.2" height="3"/><rect x="13.8" y="0" width="1.2" height="3"/></g></svg>
<div class="a" style="left:716px;top:331px;width:31px;height:34px;background:#353535;"></div>
<svg class="a" style="left:723px;top:334px;" width="16" height="3" viewBox="0 0 16 3"><g fill="#1e1e1e"><rect x="0.0" y="0" width="1.2" height="3"/><rect x="2.3" y="0" width="1.2" height="3"/><rect x="4.6" y="0" width="1.2" height="3"/><rect x="6.9" y="0" width="1.2" height="3"/><rect x="9.2" y="0" width="1.2" height="3"/><rect x="11.5" y="0" width="1.2" height="3"/><rect x="13.8" y="0" width="1.2" height="3"/></g></svg>
<div class="a" style="left:716px;top:367px;width:31px;height:32.69999999999999px;background:#353535;"></div>
<svg class="a" style="left:723px;top:370px;" width="16" height="3" viewBox="0 0 16 3"><g fill="#1e1e1e"><rect x="0.0" y="0" width="1.2" height="3"/><rect x="2.3" y="0" width="1.2" height="3"/><rect x="4.6" y="0" width="1.2" height="3"/><rect x="6.9" y="0" width="1.2" height="3"/><rect x="9.2" y="0" width="1.2" height="3"/><rect x="11.5" y="0" width="1.2" height="3"/><rect x="13.8" y="0" width="1.2" height="3"/></g></svg>
<div class="a" style="left:716px;top:401px;width:31px;height:33.60000000000002px;background:#353535;"></div>
<svg class="a" style="left:723px;top:404px;" width="16" height="3" viewBox="0 0 16 3"><g fill="#1e1e1e"><rect x="0.0" y="0" width="1.2" height="3"/><rect x="2.3" y="0" width="1.2" height="3"/><rect x="4.6" y="0" width="1.2" height="3"/><rect x="6.9" y="0" width="1.2" height="3"/><rect x="9.2" y="0" width="1.2" height="3"/><rect x="11.5" y="0" width="1.2" height="3"/><rect x="13.8" y="0" width="1.2" height="3"/></g></svg>
<div class="a" style="left:716px;top:436px;width:31px;height:33px;background:#353535;"></div>
<svg class="a" style="left:723px;top:439px;" width="16" height="3" viewBox="0 0 16 3"><g fill="#1e1e1e"><rect x="0.0" y="0" width="1.2" height="3"/><rect x="2.3" y="0" width="1.2" height="3"/><rect x="4.6" y="0" width="1.2" height="3"/><rect x="6.9" y="0" width="1.2" height="3"/><rect x="9.2" y="0" width="1.2" height="3"/><rect x="11.5" y="0" width="1.2" height="3"/><rect x="13.8" y="0" width="1.2" height="3"/></g></svg>
<div class="a" style="left:716px;top:470px;width:31px;height:33px;background:#353535;"></div>
<svg class="a" style="left:723px;top:473px;" width="16" height="3" viewBox="0 0 16 3"><g fill="#1e1e1e"><rect x="0.0" y="0" width="1.2" height="3"/><rect x="2.3" y="0" width="1.2" height="3"/><rect x="4.6" y="0" width="1.2" height="3"/><rect x="6.9" y="0" width="1.2" height="3"/><rect x="9.2" y="0" width="1.2" height="3"/><rect x="11.5" y="0" width="1.2" height="3"/><rect x="13.8" y="0" width="1.2" height="3"/></g></svg>
<div class="a" style="left:716px;top:505px;width:31px;height:135px;background:#353535;"></div>
<div class="a" style="left:716px;top:99px;width:31px;height:1.5px;background:#262626;"></div>
<div class="a" style="left:716px;top:180px;width:31px;height:1.5px;background:#262626;"></div>
<div class="a" style="left:716px;top:239.5px;width:31px;height:1.5px;background:#262626;"></div>
<div class="a" style="left:716px;top:297px;width:31px;height:1.5px;background:#262626;"></div>
<div class="a" style="left:716px;top:329.5px;width:31px;height:1.5px;background:#262626;"></div>
<div class="a" style="left:716px;top:365px;width:31px;height:1.5px;background:#262626;"></div>
<div class="a" style="left:716px;top:399.7px;width:31px;height:1.5px;background:#262626;"></div>
<div class="a" style="left:716px;top:434.6px;width:31px;height:1.5px;background:#262626;"></div>
<div class="a" style="left:716px;top:469px;width:31px;height:1.5px;background:#262626;"></div>
<div class="a" style="left:716px;top:503px;width:31px;height:1.5px;background:#262626;"></div>
<svg class="a" style="left:724px;top:79px;" width="17" height="13" viewBox="0 0 17 13"><path d="M8 1 C2 1 0 5 1 8 C2 11 5 12 9 12 C14 12 16 9 16 6 C16 3 13 1 8 1Z" fill="#cdcdcd"/><g fill="#333"><circle cx="4" cy="8" r="1.2"/><circle cx="7" cy="9.5" r="1.2"/><circle cx="10.5" cy="9" r="1.2"/><circle cx="13" cy="6.5" r="1.1"/><circle cx="12" cy="3.5" r="1"/></g></svg>
<svg class="a" style="left:725px;top:115px;" width="14" height="11" viewBox="0 0 14 11"><rect x="0" y="0" width="14" height="11" fill="#cdcdcd"/><g fill="#555"><rect x="1" y="1" width="3.5" height="4"/><rect x="9.5" y="1" width="3.5" height="4"/><rect x="1" y="6" width="3.5" height="4"/><rect x="5.3" y="6" width="3.5" height="4"/><rect x="9.5" y="6" width="3.5" height="4"/></g></svg>
<svg class="a" style="left:725px;top:136px;" width="15" height="15" viewBox="0 0 15 15"><rect x="2" y="8" width="9" height="7" fill="#cdcdcd"/><path d="M4 8L3 2M6.5 8V1M9 8L12 3" stroke="#cdcdcd" stroke-width="1.3"/><circle cx="3" cy="2" r="1.5" fill="#cdcdcd"/><circle cx="12" cy="3" r="2" fill="#cdcdcd"/></svg>
<svg class="a" style="left:724px;top:159px;" width="16" height="15" viewBox="0 0 16 15"><circle cx="8" cy="4" r="3.5" fill="#cdcdcd"/><circle cx="4" cy="8.5" r="3.5" fill="#cdcdcd"/><circle cx="12" cy="8.5" r="3.5" fill="#cdcdcd"/><path d="M8 6L6 14H10Z" fill="#cdcdcd"/><path d="M5 14.5h6" stroke="#cdcdcd"/></svg>
<svg class="a" style="left:724.5px;top:196px;" width="15" height="11" viewBox="0 0 15 11"><rect x="0" y="0" width="15" height="1.5" fill="#cdcdcd"/><rect x="0" y="4" width="15" height="2" fill="#cdcdcd"/><rect x="0" y="8.5" width="15" height="2.5" fill="#cdcdcd"/></svg>
<svg class="a" style="left:724px;top:217px;" width="16" height="16" viewBox="0 0 16 16"><circle cx="6.5" cy="6.5" r="6" fill="#cdcdcd"/><circle cx="9.5" cy="9.5" r="5.5" fill="#666" stroke="#cdcdcd" stroke-width="1"/></svg>
<svg class="a" style="left:724px;top:252px;" width="16" height="16" viewBox="0 0 16 16"><circle cx="8" cy="8" r="7" fill="none" stroke="#cdcdcd" stroke-width="1.3" stroke-dasharray="1.5 1.2"/><circle cx="8" cy="8" r="5.3" fill="#cdcdcd"/></svg>
<svg class="a" style="left:724px;top:276px;" width="16" height="15" viewBox="0 0 16 15"><rect x="4.5" y=".5" width="11" height="11" fill="none" stroke="#cdcdcd" stroke-width="1.2"/><rect x=".5" y="7.5" width="6" height="6" fill="#353535" stroke="#cdcdcd" stroke-width="1.2"/></svg>
<svg class="a" style="left:724px;top:310px;" width="16" height="15" viewBox="0 0 16 15"><rect x="1" y="1" width="8" height="8" fill="#cdcdcd"/><rect x="6" y="6" width="9" height="8" fill="#cdcdcd" stroke="#444" stroke-width="1"/><rect x="6" y="6" width="3" height="3" fill="#777"/></svg>
<svg class="a" style="left:724px;top:344px;" width="16" height="16" viewBox="0 0 16 16"><rect x="1" y="0" width="1.6" height="16" fill="#cdcdcd"/><rect x="3" y="2" width="8" height="5" fill="#cdcdcd"/><rect x="3" y="9" width="12" height="5" fill="#cdcdcd"/></svg>
<svg class="a" style="left:725px;top:380px;" width="14" height="13" viewBox="0 0 14 13"><rect x="1.5" y="1.5" width="11" height="10" fill="none" stroke="#cdcdcd" stroke-width="1.3" stroke-dasharray="2 1.5"/><rect x="6" y="5.5" width="2" height="2" fill="#cdcdcd"/></svg>
<svg class="a" style="left:725px;top:413px;" width="15" height="14" viewBox="0 0 15 14"><path d="M5 1.5H1.5V12.5H12.5V9" fill="none" stroke="#cdcdcd" stroke-width="1.5"/><path d="M6 8L13 1M8.5 1H13.5V6" fill="none" stroke="#cdcdcd" stroke-width="1.5"/></svg>
<svg class="a" style="left:724px;top:448px;" width="16" height="14" viewBox="0 0 16 14"><path d="M8 0L16 4L8 8L0 4Z" fill="#cdcdcd"/><path d="M1 7L8 10.5L15 7V8.5L8 12L1 8.5Z" fill="#cdcdcd"/><path d="M1 9.5L8 13L15 9.5" fill="none" stroke="#cdcdcd" stroke-width="1.3"/></svg>
<svg class="a" style="left:725px;top:483px;" width="14" height="12" viewBox="0 0 14 12"><defs><linearGradient id="g3" x1="0" x2="1"><stop offset="0" stop-color="#333"/><stop offset="1" stop-color="#ddd"/></linearGradient></defs><rect x=".5" y=".5" width="13" height="11" fill="url(#g3)" stroke="#cdcdcd" stroke-width="1"/></svg>
<div class="a" style="left:749px;top:66px;width:211px;height:22px;background:#282828;"></div>
<div class="a" style="left:749px;top:66px;width:55px;height:22px;background:#323232;"></div>
<div class="a" style="left:804px;top:66px;width:1px;height:22px;background:#262626;"></div>
<div class="a" style="left:866px;top:66px;width:1px;height:22px;background:#262626;"></div>
<div class="t" style="left:757px;top:72.20px;font-size:9.8px;line-height:9.8px;color:#f0f0f0;font-weight:bold;transform:scaleX(0.825);transform-origin:0 0;">Properties</div>
<div class="t" style="left:811.5px;top:72.20px;font-size:9.8px;line-height:9.8px;color:#b0b0b0;transform:scaleX(0.889);transform-origin:0 0;">Color Guide</div>
<div class="a" style="left:749px;top:88px;width:211px;height:552px;background:#323232;"></div>
<div class="t" style="left:757px;top:97.70px;font-size:9.8px;line-height:9.8px;color:#c0c0c0;transform:scaleX(0.846);transform-origin:0 0;">No Selection</div>
<div class="a" style="left:749px;top:116px;width:211px;height:1.5px;background:#282828;"></div>
<div class="t" style="left:757px;top:125.20px;font-size:9.8px;line-height:9.8px;color:#b0b0b0;transform:scaleX(0.847);transform-origin:0 0;">Transform</div>
<svg class="a" style="left:757px;top:153px;" width="17" height="17" viewBox="0 0 17 17"><g fill="none" stroke="#aaa" stroke-width=".9"><rect x="0.5" y="0.5" width="4" height="4"/><rect x="0.5" y="6.3" width="4" height="4"/><rect x="0.5" y="12.1" width="4" height="4"/><rect x="6.3" y="0.5" width="4" height="4"/><rect x="6.3" y="12.1" width="4" height="4"/><rect x="12.1" y="0.5" width="4" height="4"/><rect x="12.1" y="6.3" width="4" height="4"/><rect x="12.1" y="12.1" width="4" height="4"/></g><rect x="6.3" y="6.3" width="4" height="4" fill="#ddd"/></svg>
<div class="t" style="left:786px;top:147.38px;font-size:9px;line-height:9px;color:#9a9a9a;font-weight:bold;transform:scaleX(0.889);transform-origin:0 0;">X:</div>
<div class="t" style="left:786px;top:169.38px;font-size:9px;line-height:9px;color:#9a9a9a;font-weight:bold;transform:scaleX(0.960);transform-origin:0 0;">Y:</div>
<div class="t" style="left:856px;top:147.38px;font-size:9px;line-height:9px;color:#9a9a9a;font-weight:bold;transform:scaleX(0.883);transform-origin:0 0;">W:</div>
<div class="t" style="left:857px;top:169.38px;font-size:9px;line-height:9px;color:#9a9a9a;font-weight:bold;transform:scaleX(1.053);transform-origin:0 0;">H:</div>
<div class="a" style="left:796px;top:142px;width:47px;height:17px;background:#393939;border-radius:2px"></div>
<div class="t" style="left:800px;top:146.46px;font-size:9.5px;line-height:9.5px;color:#5e5e5e;transform:scaleX(0.891);transform-origin:0 0;">0 px</div>
<div class="a" style="left:796px;top:165px;width:47px;height:17px;background:#393939;border-radius:2px"></div>
<div class="t" style="left:800px;top:169.46px;font-size:9.5px;line-height:9.5px;color:#5e5e5e;transform:scaleX(0.891);transform-origin:0 0;">0 px</div>
<div class="a" style="left:869px;top:142px;width:47px;height:17px;background:#393939;border-radius:2px"></div>
<div class="t" style="left:873px;top:146.46px;font-size:9.5px;line-height:9.5px;color:#5e5e5e;transform:scaleX(0.891);transform-origin:0 0;">0 px</div>
<div class="a" style="left:869px;top:165px;width:47px;height:17px;background:#393939;border-radius:2px"></div>
<div class="t" style="left:873px;top:169.46px;font-size:9.5px;line-height:9.5px;color:#5e5e5e;transform:scaleX(0.891);transform-origin:0 0;">0 px</div>
<div class="a" style="left:796px;top:186px;width:47px;height:17px;background:#393939;border-radius:2px"></div>
<div class="t" style="left:800px;top:190.46px;font-size:9.5px;line-height:9.5px;color:#5e5e5e;">0°</div>
<svg class="a" style="left:832px;top:193px;" width="7" height="4" viewBox="0 0 7 4"><path d="M0.7 0.7 L3.5 3.3 L6.3 0.7" fill="none" stroke="#5a5a5a" stroke-width="1.4"/></svg>
<svg class="a" style="left:781px;top:188px;" width="13" height="11" viewBox="0 0 13 11"><path d="M1 10H12M1 10L9 2M6 10 q0-2.5 -2-4" fill="none" stroke="#9a9a9a" stroke-width="1.2"/></svg>
<svg class="a" style="left:926px;top:155px;" width="13" height="15" viewBox="0 0 13 15"><rect x="3" y="1" width="5" height="7" rx="2.5" fill="none" stroke="#c0c0c0" stroke-width="1.3"/><rect x="5" y="7" width="5" height="7" rx="2.5" fill="none" stroke="#c0c0c0" stroke-width="1.3"/><path d="M1 2L12 13" stroke="#323232" stroke-width="3"/><path d="M1 2L12 13" stroke="#c0c0c0" stroke-width="1.2"/></svg>
<svg class="a" style="left:873px;top:190px;" width="15" height="12" viewBox="0 0 15 12"><path d="M0 1V11L5 6Z M15 1V11L10 6Z" fill="#b0b0b0"/><path d="M7.5 0V12" stroke="#b0b0b0" stroke-width="1" stroke-dasharray="1.5 1"/><path d="M1 3V9L4 6Z" fill="#323232"/></svg>
<svg class="a" style="left:898px;top:189px;" width="11" height="14" viewBox="0 0 11 14"><path d="M1 0H10L5.5 5Z M1 14H10L5.5 9Z" fill="#b0b0b0"/><path d="M0 7H11" stroke="#b0b0b0" stroke-width="1" stroke-dasharray="1.5 1"/><path d="M3.5 12.5H7.5L5.5 10.5Z" fill="#323232"/></svg>
<svg class="a" style="left:936px;top:212.5px;" width="13" height="5" viewBox="0 0 13 5"><g fill="#d0d0d0"><circle cx="2" cy="2.5" r="1.8"/><circle cx="6.5" cy="2.5" r="1.8"/><circle cx="11" cy="2.5" r="1.8"/></g></svg>
<div class="a" style="left:749px;top:226px;width:211px;height:1.5px;background:#282828;"></div>
<div class="t" style="left:757px;top:234.70px;font-size:9.8px;line-height:9.8px;color:#b0b0b0;transform:scaleX(0.832);transform-origin:0 0;">Appearance</div>
<div class="a" style="left:757px;top:254px;width:16px;height:16px;background:#fff;border:1px solid #888;overflow:hidden"><div class="a" style="left:-4px;top:6.5px;width:22px;height:1.6px;background:#d01010;transform:rotate(-45deg)"></div></div>
<div class="t" style="left:783px;top:256.70px;font-size:9.8px;line-height:9.8px;color:#9a9a9a;transform:scaleX(0.879);transform-origin:0 0;">Fill</div>
<div class="a" style="left:757px;top:278px;width:16px;height:16px;background:#e81010;border:1px solid #aaa"></div>
<div class="a" style="left:761px;top:282px;width:8px;height:8px;background:#323232;border:1.2px solid #ddd"></div>
<div class="t" style="left:783px;top:281.70px;font-size:9.8px;line-height:9.8px;color:#d0d0d0;transform:scaleX(0.812);transform-origin:0 0;">Stroke</div>
<div class="a" style="left:783px;top:292px;width:23px;height:1px;background:;background-image:repeating-linear-gradient(90deg,#9a9a9a 0 1px,transparent 1px 2px)"></div>
<div class="a" style="left:818px;top:277px;width:58px;height:17px;background:#2a2a2a;border:1px solid #3a3a3a;border-radius:2px;"></div>
<div class="a" style="left:833px;top:278px;width:1px;height:15px;background:#3a3a3a;"></div>
<div class="a" style="left:861px;top:278px;width:1px;height:15px;background:#3a3a3a;"></div>
<svg class="a" style="left:822px;top:279px;" width="7" height="4" viewBox="0 0 7 4"><path d="M0.7 3.3 L3.5 0.7 L6.3 3.3" fill="none" stroke="#cfcfcf" stroke-width="1.4"/></svg>
<svg class="a" style="left:822px;top:287px;" width="7" height="4" viewBox="0 0 7 4"><path d="M0.7 0.7 L3.5 3.3 L6.3 0.7" fill="none" stroke="#cfcfcf" stroke-width="1.4"/></svg>
<div class="t" style="left:836px;top:280.96px;font-size:9.5px;line-height:9.5px;color:#d8d8d8;">5 pt</div>
<svg class="a" style="left:865px;top:283px;" width="7" height="4" viewBox="0 0 7 4"><path d="M0.7 0.7 L3.5 3.3 L6.3 0.7" fill="none" stroke="#cfcfcf" stroke-width="1.4"/></svg>
<svg class="a" style="left:757px;top:302px;" width="16" height="16" viewBox="0 0 16 16"><rect x=".5" y=".5" width="15" height="15" fill="#666" stroke="#aaa"/><rect x="2" y="2" width="3" height="3" fill="#999"/><rect x="2" y="8" width="3" height="3" fill="#999"/><rect x="5" y="5" width="3" height="3" fill="#999"/><rect x="5" y="11" width="3" height="3" fill="#999"/><rect x="8" y="2" width="3" height="3" fill="#999"/><rect x="8" y="8" width="3" height="3" fill="#999"/><rect x="11" y="5" width="3" height="3" fill="#999"/><rect x="11" y="11" width="3" height="3" fill="#999"/></svg>
<div class="t" style="left:783px;top:305.70px;font-size:9.8px;line-height:9.8px;color:#d0d0d0;transform:scaleX(0.843);transform-origin:0 0;">Opacity</div>
<div class="a" style="left:783px;top:316px;width:28px;height:1px;background:;background-image:repeating-linear-gradient(90deg,#9a9a9a 0 1px,transparent 1px 2px)"></div>
<div class="a" style="left:818px;top:301px;width:58px;height:17px;background:#2a2a2a;border:1px solid #3a3a3a;border-radius:2px;"></div>
<div class="a" style="left:861px;top:302px;width:1px;height:15px;background:#3a3a3a;"></div>
<div class="t" style="left:821.5px;top:305.46px;font-size:9.5px;line-height:9.5px;color:#d8d8d8;transform:scaleX(0.864);transform-origin:0 0;">100%</div>
<svg class="a" style="left:867px;top:306px;" width="4" height="7" viewBox="0 0 4 7"><path d="M0.7 0.7 L3.3 3.5 L0.7 6.3" fill="none" stroke="#cfcfcf" stroke-width="1.4"/></svg>
<div class="t" style="left:761px;top:327px;font-size:12px;line-height:12px;color:#bbb;font-family:Liberation Serif;font-style:italic">fx<span style="font-style:normal;font-size:9px">.</span></div>
<svg class="a" style="left:936px;top:352.4px;" width="13" height="5" viewBox="0 0 13 5"><g fill="#d0d0d0"><circle cx="2" cy="2.5" r="1.8"/><circle cx="6.5" cy="2.5" r="1.8"/><circle cx="11" cy="2.5" r="1.8"/></g></svg>
<div class="a" style="left:749px;top:364px;width:211px;height:1.5px;background:#282828;"></div>
<div class="t" style="left:757px;top:374.70px;font-size:9.8px;line-height:9.8px;color:#b0b0b0;transform:scaleX(0.848);transform-origin:0 0;">Character</div>
<div class="a" style="left:758px;top:392px;width:185px;height:17px;background:#2a2a2a;border:1px solid #3a3a3a;border-radius:2px;"></div>
<div class="a" style="left:926px;top:393px;width:1px;height:15px;background:#3a3a3a;"></div>
<svg class="a" style="left:931px;top:398px;" width="8" height="5" viewBox="0 0 8 5"><path d="M0.7 0.7 L4.0 4.3 L7.3 0.7" fill="none" stroke="#cfcfcf" stroke-width="1.4"/></svg>
<svg class="a" style="left:762px;top:396px;" width="12" height="9" viewBox="0 0 12 9"><circle cx="6.5" cy="4" r="3" fill="none" stroke="#d0d0d0" stroke-width="1.1"/><path d="M4.5 6 L1.5 9" stroke="#d0d0d0" stroke-width="1.3"/><path d="M8.5 7h3.5l-1.75 2z" fill="#d0d0d0"/></svg>
<div class="t" style="left:780px;top:395.54px;font-size:10px;line-height:10px;color:#e8e8e8;transform:scaleX(0.827);transform-origin:0 0;">Myriad Pro</div>
<div class="a" style="left:758px;top:414px;width:185px;height:17px;background:#2a2a2a;border:1px solid #3a3a3a;border-radius:2px;"></div>
<div class="a" style="left:926px;top:415px;width:1px;height:15px;background:#3a3a3a;"></div>
<svg class="a" style="left:931px;top:420px;" width="8" height="5" viewBox="0 0 8 5"><path d="M0.7 0.7 L4.0 4.3 L7.3 0.7" fill="none" stroke="#cfcfcf" stroke-width="1.4"/></svg>
<div class="t" style="left:763.7px;top:417.54px;font-size:10px;line-height:10px;color:#e8e8e8;transform:scaleX(0.800);transform-origin:0 0;">Regular</div>
<div class="a" style="left:776px;top:436px;width:67px;height:17px;background:#2a2a2a;border:1px solid #3a3a3a;border-radius:2px;"></div>
<div class="a" style="left:790px;top:437px;width:1px;height:15px;background:#3a3a3a;"></div>
<div class="a" style="left:828px;top:437px;width:1px;height:15px;background:#3a3a3a;"></div>
<svg class="a" style="left:779.5px;top:438px;" width="7" height="4" viewBox="0 0 7 4"><path d="M0.7 3.3 L3.5 0.7 L6.3 3.3" fill="none" stroke="#cfcfcf" stroke-width="1.4"/></svg>
<svg class="a" style="left:779.5px;top:446px;" width="7" height="4" viewBox="0 0 7 4"><path d="M0.7 0.7 L3.5 3.3 L6.3 0.7" fill="none" stroke="#cfcfcf" stroke-width="1.4"/></svg>
<svg class="a" style="left:832px;top:442px;" width="7" height="4" viewBox="0 0 7 4"><path d="M0.7 0.7 L3.5 3.3 L6.3 0.7" fill="none" stroke="#cfcfcf" stroke-width="1.4"/></svg>
<div class="t" style="left:794px;top:440.46px;font-size:9.5px;line-height:9.5px;color:#d8d8d8;transform:scaleX(0.909);transform-origin:0 0;">140 pt</div>
<div class="a" style="left:874px;top:436px;width:69px;height:17px;background:#2a2a2a;border:1px solid #3a3a3a;border-radius:2px;"></div>
<div class="a" style="left:888px;top:437px;width:1px;height:15px;background:#3a3a3a;"></div>
<div class="a" style="left:928px;top:437px;width:1px;height:15px;background:#3a3a3a;"></div>
<svg class="a" style="left:877.5px;top:438px;" width="7" height="4" viewBox="0 0 7 4"><path d="M0.7 3.3 L3.5 0.7 L6.3 3.3" fill="none" stroke="#cfcfcf" stroke-width="1.4"/></svg>
<svg class="a" style="left:877.5px;top:446px;" width="7" height="4" viewBox="0 0 7 4"><path d="M0.7 0.7 L3.5 3.3 L6.3 0.7" fill="none" stroke="#cfcfcf" stroke-width="1.4"/></svg>
<svg class="a" style="left:932px;top:442px;" width="7" height="4" viewBox="0 0 7 4"><path d="M0.7 0.7 L3.5 3.3 L6.3 0.7" fill="none" stroke="#cfcfcf" stroke-width="1.4"/></svg>
<div class="t" style="left:892px;top:440.46px;font-size:9.5px;line-height:9.5px;color:#d8d8d8;">(168 pt)</div>
<div class="a" style="left:776px;top:458px;width:67px;height:17px;background:#2a2a2a;border:1px solid #3a3a3a;border-radius:2px;"></div>
<div class="a" style="left:790px;top:459px;width:1px;height:15px;background:#3a3a3a;"></div>
<div class="a" style="left:828px;top:459px;width:1px;height:15px;background:#3a3a3a;"></div>
<svg class="a" style="left:779.5px;top:460px;" width="7" height="4" viewBox="0 0 7 4"><path d="M0.7 3.3 L3.5 0.7 L6.3 3.3" fill="none" stroke="#cfcfcf" stroke-width="1.4"/></svg>
<svg class="a" style="left:779.5px;top:468px;" width="7" height="4" viewBox="0 0 7 4"><path d="M0.7 0.7 L3.5 3.3 L6.3 0.7" fill="none" stroke="#cfcfcf" stroke-width="1.4"/></svg>
<svg class="a" style="left:832px;top:464px;" width="7" height="4" viewBox="0 0 7 4"><path d="M0.7 0.7 L3.5 3.3 L6.3 0.7" fill="none" stroke="#cfcfcf" stroke-width="1.4"/></svg>
<div class="t" style="left:794px;top:462.46px;font-size:9.5px;line-height:9.5px;color:#d8d8d8;transform:scaleX(0.972);transform-origin:0 0;">Auto</div>
<div class="a" style="left:874px;top:458px;width:69px;height:17px;background:#2a2a2a;border:1px solid #3a3a3a;border-radius:2px;"></div>
<div class="a" style="left:888px;top:459px;width:1px;height:15px;background:#3a3a3a;"></div>
<div class="a" style="left:928px;top:459px;width:1px;height:15px;background:#3a3a3a;"></div>
<svg class="a" style="left:877.5px;top:460px;" width="7" height="4" viewBox="0 0 7 4"><path d="M0.7 3.3 L3.5 0.7 L6.3 3.3" fill="none" stroke="#cfcfcf" stroke-width="1.4"/></svg>
<svg class="a" style="left:877.5px;top:468px;" width="7" height="4" viewBox="0 0 7 4"><path d="M0.7 0.7 L3.5 3.3 L6.3 0.7" fill="none" stroke="#cfcfcf" stroke-width="1.4"/></svg>
<svg class="a" style="left:932px;top:464px;" width="7" height="4" viewBox="0 0 7 4"><path d="M0.7 0.7 L3.5 3.3 L6.3 0.7" fill="none" stroke="#cfcfcf" stroke-width="1.4"/></svg>
<div class="t" style="left:892px;top:462.46px;font-size:9.5px;line-height:9.5px;color:#d8d8d8;transform:scaleX(0.946);transform-origin:0 0;">0</div>
<svg class="a" style="left:757px;top:437px;" width="16" height="15" viewBox="0 0 16 15"><text x="0" y="14" font-family="Liberation Serif" font-size="12" font-weight="bold" fill="#ccc">T</text><text x="6" y="13" font-family="Liberation Serif" font-size="15" font-weight="bold" fill="#ccc">T</text></svg>
<svg class="a" style="left:856px;top:435px;" width="15" height="18" viewBox="0 0 15 18"><path d="M8 1 L4 15 M8 1 L12 15 M5 9H11M5 13H11" fill="none" stroke="#ccc" stroke-width="1.2"/><path d="M2 4V16M0 6L2 3L4 6M0 14L2 17L4 14" fill="none" stroke="#ccc" stroke-width="1"/></svg>
<svg class="a" style="left:757px;top:458px;" width="16" height="17" viewBox="0 0 16 17"><text x="0" y="11" font-family="Liberation Sans" font-size="11" fill="#ccc">V/A</text><path d="M4 14H14M6 12L4 14L6 16" fill="none" stroke="#ccc" stroke-width="1"/></svg>
<svg class="a" style="left:856px;top:457px;" width="16" height="18" viewBox="0 0 16 18"><rect x="0" y="0" width="15" height="11" fill="#ccc"/><text x="1" y="10" font-family="Liberation Sans" font-size="10" font-weight="bold" fill="#333">VA</text><path d="M0 14H15M2 12L0 14L2 16M13 12L15 14L13 16" fill="none" stroke="#ccc" stroke-width="1"/></svg>
<svg class="a" style="left:936px;top:484px;" width="13" height="5" viewBox="0 0 13 5"><g fill="#d0d0d0"><circle cx="2" cy="2.5" r="1.8"/><circle cx="6.5" cy="2.5" r="1.8"/><circle cx="11" cy="2.5" r="1.8"/></g></svg>
<div class="a" style="left:749px;top:497px;width:211px;height:1.5px;background:#282828;"></div>
<div class="t" style="left:757px;top:505.20px;font-size:9.8px;line-height:9.8px;color:#b0b0b0;transform:scaleX(0.819);transform-origin:0 0;">Paragraph</div>
<div class="a" style="left:784px;top:526px;width:21px;height:18px;background:#1e1e1e;border-radius:2px"></div>
<svg class="a" style="left:763.0px;top:529px;" width="13" height="12" viewBox="0 0 13 12"><path d="M0 0.50H13M0 3.25H9M0 6.00H13M0 8.75H9M0 11.50H13" stroke="#c8c8c8" stroke-width="1.1"/></svg>
<svg class="a" style="left:788.0px;top:529px;" width="13" height="12" viewBox="0 0 13 12"><path d="M0 0.50H13M2 3.25H11M0 6.00H13M2 8.75H11M0 11.50H13" stroke="#c8c8c8" stroke-width="1.1"/></svg>
<svg class="a" style="left:814.0px;top:529px;" width="13" height="12" viewBox="0 0 13 12"><path d="M0 0.50H13M4 3.25H13M0 6.00H13M4 8.75H13M0 11.50H13" stroke="#c8c8c8" stroke-width="1.1"/></svg>
<svg class="a" style="left:840.0px;top:529px;" width="13" height="12" viewBox="0 0 13 12"><path d="M0 0.50H13M0 3.25H13M0 6.00H13M0 8.75H13M0 11.50H9" stroke="#c8c8c8" stroke-width="1.1"/></svg>
<svg class="a" style="left:866.0px;top:529px;" width="13" height="12" viewBox="0 0 13 12"><path d="M0 0.50H13M0 3.25H13M0 6.00H13M0 8.75H13M2 11.50H11" stroke="#c8c8c8" stroke-width="1.1"/></svg>
<svg class="a" style="left:892.0px;top:529px;" width="13" height="12" viewBox="0 0 13 12"><path d="M0 0.50H13M0 3.25H13M0 6.00H13M0 8.75H13M4 11.50H13" stroke="#c8c8c8" stroke-width="1.1"/></svg>
<svg class="a" style="left:918.0px;top:529px;" width="13" height="12" viewBox="0 0 13 12"><path d="M0 0.50H13M0 3.25H13M0 6.00H13M0 8.75H13M0 11.50H13" stroke="#c8c8c8" stroke-width="1.1"/></svg>
<svg class="a" style="left:936px;top:555px;" width="13" height="5" viewBox="0 0 13 5"><g fill="#d0d0d0"><circle cx="2" cy="2.5" r="1.8"/><circle cx="6.5" cy="2.5" r="1.8"/><circle cx="11" cy="2.5" r="1.8"/></g></svg>
<div class="a" style="left:749px;top:567px;width:211px;height:1.5px;background:#282828;"></div>
<div class="t" style="left:757px;top:580.70px;font-size:9.8px;line-height:9.8px;color:#b0b0b0;transform:scaleX(0.851);transform-origin:0 0;">Quick Actions</div>
<svg class="a" style="left:0;top:0;overflow:hidden" width="960" height="640" viewBox="0 0 960 640"><defs><pattern id="stp" width="4.5" height="40" patternUnits="userSpaceOnUse" patternTransform="rotate(-9)"><rect x="0" y="0" width="1.2" height="40" fill="#000"/><rect x="2.2" y="0" width="1" height="40" fill="#888"/></pattern><pattern id="mesh" width="4.4" height="4.1" patternUnits="userSpaceOnUse" patternTransform="rotate(-10)"><circle cx="2.2" cy="2.05" r="1.5" fill="#d8d8d8" stroke="#1a1a1a" stroke-width=".75"/></pattern><pattern id="bstp" width="3.6" height="40" patternUnits="userSpaceOnUse" patternTransform="rotate(12)"><rect x="0" y="0" width="1.2" height="40" fill="#000" opacity=".5"/></pattern></defs>
<path d="M88.0 342.0 L100.0 352.0 L118.0 362.0 L138.9 372.4 L137.0 392.8 L120.0 383.0 L104.0 372.0 L88.5 357.0Z" fill="#fff" stroke="#000" stroke-width="0.8" />
<path d="M88.0 342.0 L90.0 358.5" fill="none" stroke="#000" stroke-width="1.0" />
<path d="M89.6 343.3 L91.8 360.2" fill="none" stroke="#999" stroke-width="0.8" />
<path d="M92.4 345.7 L94.2 362.5" fill="none" stroke="#000" stroke-width="1.0" />
<path d="M94.0 347.0 L96.0 364.3" fill="none" stroke="#999" stroke-width="0.8" />
<path d="M96.9 349.4 L98.4 366.6" fill="none" stroke="#000" stroke-width="1.0" />
<path d="M98.5 350.7 L100.2 368.4" fill="none" stroke="#999" stroke-width="0.8" />
<path d="M101.3 352.7 L102.7 370.7" fill="none" stroke="#000" stroke-width="1.0" />
<path d="M102.9 353.6 L104.5 372.3" fill="none" stroke="#999" stroke-width="0.8" />
<path d="M105.7 355.2 L106.9 374.0" fill="none" stroke="#000" stroke-width="1.0" />
<path d="M107.3 356.1 L108.7 375.2" fill="none" stroke="#999" stroke-width="0.8" />
<path d="M110.1 357.6 L111.1 376.9" fill="none" stroke="#000" stroke-width="1.0" />
<path d="M111.7 358.5 L112.9 378.1" fill="none" stroke="#999" stroke-width="0.8" />
<path d="M114.6 360.1 L115.3 379.8" fill="none" stroke="#000" stroke-width="1.0" />
<path d="M116.2 361.0 L117.1 381.0" fill="none" stroke="#999" stroke-width="0.8" />
<path d="M119.0 362.5 L119.5 382.7" fill="none" stroke="#000" stroke-width="1.0" />
<path d="M120.6 363.3 L121.3 383.8" fill="none" stroke="#999" stroke-width="0.8" />
<path d="M123.4 364.7 L123.7 385.2" fill="none" stroke="#000" stroke-width="1.0" />
<path d="M125.0 365.5 L125.5 386.2" fill="none" stroke="#999" stroke-width="0.8" />
<path d="M127.8 366.9 L128.0 387.6" fill="none" stroke="#000" stroke-width="1.0" />
<path d="M129.4 367.7 L129.8 388.6" fill="none" stroke="#999" stroke-width="0.8" />
<path d="M132.3 369.1 L132.2 390.0" fill="none" stroke="#000" stroke-width="1.0" />
<path d="M133.9 369.9 L134.0 391.1" fill="none" stroke="#999" stroke-width="0.8" />
<path d="M136.7 371.3 L136.4 392.4" fill="none" stroke="#000" stroke-width="1.0" />
<path d="M138.3 372.1 L138.2 392.8" fill="none" stroke="#999" stroke-width="0.8" />
<path d="M88.0 342.0 L97.0 348.0 L98.0 368.0 L89.5 360.0Z" fill="#000" stroke="none" stroke-width="1" opacity=".55"/>
<path d="M138.9 372.4 C141.8 373.9 149.2 377.8 156.6 381.3 C163.9 384.8 174.2 389.7 183.0 393.6 C191.8 397.5 200.9 401.3 209.7 404.5 C218.5 407.7 227.2 410.8 236.0 413.0 C244.8 415.2 253.5 416.3 262.8 417.6 C272.1 418.9 287.1 420.3 292.0 420.8 L292 431.5 L292.0 431.5 L277.0 429.7 L275.0 424.0 L271.6 423.5 L271.0 429.0 L257.0 427.1 L255.0 421.4 L252.6 420.9 L252.0 426.4 L240.0 424.5 L238.0 418.7 L235.6 418.2 L235.0 423.7 L223.0 421.9 L221.0 415.8 L216.6 415.3 L216.0 420.8 L205.0 418.8 L203.0 411.0 L197.6 410.5 L197.0 417.0 L185.0 413.7 L183.0 406.0 L179.6 405.5 L179.0 412.0 L166.0 407.1 L164.0 398.9 L161.6 398.4 L161.0 404.9 L151.0 399.4 L149.0 389.6 L145.6 389.1 L145.0 395.6 L137.0 394.0 Z" fill="#1010e8" stroke="#000" stroke-width="0.6" />
<path d="M292 431.5 L302.8 432.8 L302.8 428.0 L310.3 428.5 L310.3 433.4 L319.3 434.1 L319.3 429.4 L326.8 429.9 L326.8 434.7 L335.8 435.5 L335.8 430.8 L343.3 431.3 L343.3 436.1 L352.3 436.9 L352.3 432.2 L359.8 432.7 L359.8 437.5 L368.8 438.2 L368.8 433.5 L376.3 434.0 L376.3 438.8 L385.3 439.6 L385.3 434.9 L392.8 435.4 L392.8 440.2 L401.8 441.0 L401.8 436.3 L409.3 436.8 L409.3 441.6 L418.3 442.3 L418.3 437.6 L425.8 438.1 L425.8 443.0 L434.8 443.4 L435 444.4" fill="none" stroke="#000" stroke-width="0.8" />
<path d="M434.5 423.0 C438.1 423.8 449.0 426.1 456.0 428.0 C463.0 429.9 470.6 432.7 476.8 434.5 C482.9 436.3 485.1 437.4 493.0 438.8 C500.9 440.2 519.2 442.5 524.4 443.2 L524.4 453.0 L525.7 449.8 L524.7 451.8 L523.6 453.6 L519.3 453.1 L518.1 449.2 L517.1 451.0 L516.0 452.8 L511.7 452.3 L510.5 448.4 L509.5 450.2 L508.4 452.0 L504.1 451.5 L502.9 447.6 L501.9 449.5 L500.8 451.3 L496.5 450.8 L495.3 446.9 L494.3 448.7 L493.2 450.5 L488.9 450.0 L487.7 446.1 L486.7 447.9 L485.6 449.7 L481.3 449.2 L480.1 445.3 L479.1 447.1 L478.0 448.9 L473.7 448.4 L472.5 444.4 L471.5 446.2 L470.4 448.0 L466.1 447.5 L464.9 443.5 L463.9 445.3 L462.8 447.1 L458.5 446.6 L457.3 442.7 L456.3 444.4 L455.2 446.2 L450.9 445.7 L449.7 441.8 L448.7 443.6 L447.6 445.4 L443.3 444.9 L442.1 440.9 L441.1 442.7 L440.0 444.5 L435.7 444.0 L434.5 443.2 Z" fill="#1010e8" stroke="#000" stroke-width="0.6" />
<path d="M436.3 424.4 L436.8 442.4" fill="none" stroke="#000" stroke-width="1.6" opacity=".55"/>
<path d="M443.9 426.2 L444.4 443.3" fill="none" stroke="#000" stroke-width="1.6" opacity=".55"/>
<path d="M451.5 428.0 L452.0 444.2" fill="none" stroke="#000" stroke-width="1.6" opacity=".55"/>
<path d="M459.1 430.0 L459.6 445.1" fill="none" stroke="#000" stroke-width="1.6" opacity=".55"/>
<path d="M466.7 432.4 L467.2 446.0" fill="none" stroke="#000" stroke-width="1.6" opacity=".55"/>
<path d="M474.3 434.7 L474.8 446.8" fill="none" stroke="#000" stroke-width="1.6" opacity=".55"/>
<path d="M481.9 436.9 L482.4 447.7" fill="none" stroke="#000" stroke-width="1.6" opacity=".55"/>
<path d="M489.5 438.9 L490.0 448.5" fill="none" stroke="#000" stroke-width="1.6" opacity=".55"/>
<path d="M497.1 440.4 L497.6 449.2" fill="none" stroke="#000" stroke-width="1.6" opacity=".55"/>
<path d="M504.7 441.4 L505.2 450.0" fill="none" stroke="#000" stroke-width="1.6" opacity=".55"/>
<path d="M512.3 442.5 L512.8 450.8" fill="none" stroke="#000" stroke-width="1.6" opacity=".55"/>
<path d="M519.9 443.6 L520.4 451.5" fill="none" stroke="#000" stroke-width="1.6" opacity=".55"/>
<path d="M524.5 444 L524.5 452 L541.0 452.5 L541.5 456.3 L548.5 456.5 L549.0 452.7 L557.5 452.9 L558.0 456.7 L565.0 456.9 L565.5 453.3 L574.0 453.9 L574.5 457.7 L581.5 457.9 L582.0 454.4 L590.5 454.9 L591.0 458.7 L598.0 458.9 L598.5 455.4 L607.0 455.8 L607.5 459.6 L614.5 459.8 L615.0 456.1 L623.5 456.4 L624.0 460.2 L631.0 460.4 L631.5 455.4 L640.0 454.0 L640.5 457.8 L647.5 458.0 L648.0 449.0 L652 441" fill="none" stroke="#000" stroke-width="0.8" />
<path d="M138.9 372.4 C141.8 373.9 149.2 377.8 156.6 381.3 C163.9 384.8 174.2 389.7 183.0 393.6 C191.8 397.5 200.9 401.3 209.7 404.5 C218.5 407.7 227.2 410.8 236.0 413.0 C244.8 415.2 253.5 416.4 262.8 417.6 C272.1 418.9 279.1 420.3 292.0 420.5 C304.9 420.7 323.7 419.6 340.0 419.0 C356.3 418.4 374.8 416.7 390.0 417.2 C405.2 417.7 423.5 420.8 431.0 421.9 C438.5 423.0 426.8 421.6 435.0 423.8 C443.2 425.9 465.1 431.8 480.0 435.0 C494.9 438.2 508.0 441.0 524.5 443.2 C541.0 445.4 563.3 447.4 579.0 448.2 C594.7 449.0 606.7 449.2 618.5 448.2 C630.3 447.2 644.8 443.2 650.0 442.2" fill="none" stroke="#000" stroke-width="1" />
<path d="M92.0 320.0 C91.4 321.7 89.2 326.3 88.5 330.0 C87.8 333.7 88.1 340.0 88.0 342.0" fill="none" stroke="#000" stroke-width="1" />
<path d="M91.8 328.0 C94.3 329.7 95.0 332.4 107.0 338.0 C119.0 343.6 151.8 357.0 164.0 361.7 C176.2 366.4 166.9 363.2 180.0 366.2 C193.1 369.3 222.5 376.8 242.5 380.0 C262.5 383.2 260.4 383.1 300.0 385.3 C339.6 387.5 430.2 389.5 480.0 393.2 C529.8 396.9 570.0 406.9 599.0 407.6 C628.0 408.4 644.8 399.4 654.0 397.7 L655.0 401.7 C645.7 403.2 628.2 411.4 599.0 410.6 C569.8 409.8 529.8 400.4 480.0 397.0 C430.2 393.6 339.6 392.1 300.0 390.0 C260.4 387.9 262.5 387.5 242.5 384.4 C222.5 381.3 193.1 374.3 180.0 371.2 C166.9 368.2 176.2 370.8 164.0 366.0 C151.8 361.2 119.2 348.1 107.0 342.5 C94.8 336.9 93.7 334.2 91.0 332.5Z" fill="#5a5a5a" stroke="#000" stroke-width="0.9" />
<path d="M91.4 330.2 C94.0 331.9 94.9 334.6 107.0 340.2 C119.1 345.9 151.8 359.1 164.0 363.9 C176.2 368.6 166.9 365.7 180.0 368.8 C193.1 371.8 222.5 379.1 242.5 382.2 C262.5 385.3 260.4 385.5 300.0 387.6 C339.6 389.8 430.2 391.5 480.0 395.1 C529.8 398.7 569.9 408.3 599.0 409.1 C628.1 409.9 645.2 401.3 654.5 399.7" fill="none" stroke="#eee" stroke-width="0.8" stroke-dasharray="1.2 2.5"/>
<path d="M654.0 370.0 C654.5 372.5 656.5 379.7 657.0 385.0 C657.5 390.3 657.2 395.9 657.0 401.7 C656.8 407.4 656.8 412.9 656.0 419.5 C655.2 426.1 652.7 437.4 652.0 441.0" fill="none" stroke="#000" stroke-width="1" />
<path d="M93.0 319.0 C93.7 320.3 92.7 324.2 97.0 327.0 C101.3 329.8 107.8 331.8 119.0 336.0 C130.2 340.2 153.8 348.4 164.0 352.0 C174.2 355.6 169.0 355.2 180.0 357.5 C191.0 359.8 210.0 363.0 230.0 366.0 C250.0 369.0 273.3 373.8 300.0 375.5 C326.7 377.2 360.0 374.5 390.0 376.0 C420.0 377.5 455.2 382.0 480.0 384.5 C504.8 387.0 519.2 388.9 539.0 390.8 C558.8 392.7 582.5 395.5 599.0 395.7 C615.5 395.9 628.5 393.4 638.0 391.8 C647.5 390.2 653.0 386.8 656.0 385.8" fill="none" stroke="#000" stroke-width="1.1" />
<path d="M99.0 317.0 C103.0 318.7 111.2 322.8 123.0 327.0 C134.8 331.2 149.8 335.8 170.0 342.0 C190.2 348.2 231.7 360.3 244.0 364.0" fill="none" stroke="#000" stroke-width="0.7" />
<path d="M93.5 320.0 C94.0 319.3 95.7 317.7 96.5 316.0 C97.3 314.3 97.4 312.9 98.5 310.0 C99.6 307.1 100.6 302.2 103.0 298.7 C105.4 295.1 108.5 291.2 113.0 288.7 C117.5 286.2 120.0 284.9 129.7 283.7 C139.4 282.4 154.9 282.2 171.3 281.2 C187.7 280.2 218.6 278.4 228.0 277.8" fill="none" stroke="#000" stroke-width="1.1" />
<path d="M136.3 285.3 C136.3 287.2 134.9 293.4 136.3 297.0 C137.7 300.6 141.1 304.5 144.7 307.0 C148.3 309.5 152.4 310.6 158.0 312.0 C163.6 313.4 173.0 313.6 178.0 315.3 C183.0 317.0 185.2 318.7 188.0 322.0 C190.8 325.3 191.9 332.0 194.7 335.3 C197.5 338.6 200.5 340.3 204.7 342.0 C208.9 343.7 215.4 344.8 220.0 345.5 C224.6 346.2 229.0 346.8 232.0 346.0 C235.0 345.2 237.8 344.0 238.0 341.0 C238.2 338.0 234.3 333.0 233.0 328.0 C231.7 323.0 230.2 316.0 230.0 311.0 C229.8 306.0 232.0 303.2 232.0 298.0 C232.0 292.8 230.3 283.0 230.0 280.0" fill="none" stroke="#000" stroke-width="1.9" />
<path d="M136.3 285.3 C136.3 287.2 134.9 293.4 136.3 297.0 C137.7 300.6 141.1 304.5 144.7 307.0 C148.3 309.5 152.4 310.6 158.0 312.0 C163.6 313.4 173.0 313.6 178.0 315.3 C183.0 317.0 185.2 318.7 188.0 322.0 C190.8 325.3 191.9 332.0 194.7 335.3 C197.5 338.6 200.5 340.3 204.7 342.0 C208.9 343.7 215.4 344.8 220.0 345.5 C224.6 346.2 229.0 346.8 232.0 346.0 C235.0 345.2 237.8 344.0 238.0 341.0 C238.2 338.0 234.3 333.0 233.0 328.0 C231.7 323.0 230.2 316.0 230.0 311.0 C229.8 306.0 232.0 303.2 232.0 298.0 C232.0 292.8 230.3 283.0 230.0 280.0" fill="none" stroke="#fff" stroke-width="0.6" />
<path d="M129.7 283.7 L138.0 283.0 L139.0 288.7 L133.0 288.0Z" fill="#111" stroke="none" stroke-width="1" />
<path d="M233.0 299.0 C233.7 299.5 236.1 300.5 237.0 302.0 C237.9 303.5 238.4 306.0 238.4 308.0 C238.4 310.0 237.7 313.3 237.0 314.0 C236.3 314.7 234.5 312.3 234.0 312.0" fill="#000" stroke="none" stroke-width="1" />
<circle cx="202.2" cy="287.3" r="1.9" fill="none" stroke="#333" stroke-width=".75"/>
<circle cx="213.8" cy="282" r="1.9" fill="none" stroke="#333" stroke-width=".75"/>
<circle cx="216.3" cy="294.5" r="1.9" fill="none" stroke="#333" stroke-width=".75"/>
<circle cx="203" cy="300.3" r="1.9" fill="none" stroke="#333" stroke-width=".75"/>
<circle cx="217.2" cy="307.3" r="1.9" fill="none" stroke="#333" stroke-width=".75"/>
<circle cx="205.5" cy="314" r="1.9" fill="none" stroke="#333" stroke-width=".75"/>
<circle cx="219.7" cy="321.2" r="1.9" fill="none" stroke="#333" stroke-width=".75"/>
<path d="M128.0 293.7 C129.7 295.6 133.5 301.4 138.0 305.3 C142.5 309.2 148.7 314.6 155.0 317.0 C161.3 319.4 170.5 318.3 176.0 320.0 C181.5 321.7 184.3 323.7 188.0 327.0 C191.7 330.3 195.0 336.7 198.0 340.0 C201.0 343.3 200.7 345.2 206.0 347.0 C211.3 348.8 226.0 350.3 230.0 351.0" fill="none" stroke="#3535d0" stroke-width="1.05" stroke-dasharray="3 2"/>
<path d="M124.0 297.0 C125.5 299.0 128.7 305.0 133.0 309.0 C137.3 313.0 143.5 318.3 150.0 321.0 C156.5 323.7 166.5 323.2 172.0 325.0 C177.5 326.8 179.5 328.8 183.0 332.0 C186.5 335.2 189.8 340.8 193.0 344.0 C196.2 347.2 195.8 349.2 202.0 351.0 C208.2 352.8 225.3 354.3 230.0 355.0" fill="none" stroke="#3535d0" stroke-width="1.05" stroke-dasharray="3 2"/>
<path d="M226.0 282.0 L225.0 302.0" fill="none" stroke="#333" stroke-width="0.7" stroke-dasharray="3 2"/>
<path d="M103.0 308.7 L131.3 305.3 L149.7 312.8 L123.0 327.0 L110.5 322.8 L114.7 314.5Z" fill="#5cee8a" stroke="#000" stroke-width="0.6" />
<path d="M101.0 309.0 L109.5 315.0 L98.0 320.0" fill="none" stroke="#000" stroke-width="0.55" />
<path d="M111.3 327.0 L143.0 335.3 L173.0 328.7 L158.0 320.3 L164.7 325.3 L173.0 315.3" fill="none" stroke="#000" stroke-width="0.55" />
<path d="M176.3 335.3 L171.3 342.0 L181.3 348.7 L204.7 345.3" fill="none" stroke="#000" stroke-width="0.55" />
<path d="M123.0 327.0 L140.0 345.0 L150.0 350.0" fill="none" stroke="#000" stroke-width="0.55" />
<path d="M149.7 312.8 L160.0 318.0 L173.0 315.3" fill="none" stroke="#000" stroke-width="0.55" />
<path d="M205.0 347.0 L210.0 360.0" fill="none" stroke="#000" stroke-width="0.55" />
<path d="M226.0 352.0 L222.0 362.0" fill="none" stroke="#000" stroke-width="0.55" />
<path d="M230.0 281.0 C238.3 277.8 263.3 268.3 280.0 262.0 C296.7 255.7 316.3 248.7 330.0 243.0 C343.7 237.3 347.7 232.7 362.0 228.0 C376.3 223.3 407.0 217.2 416.0 215.0" fill="none" stroke="#1010e8" stroke-width="3" />
<path d="M230.0 283.5 C238.3 280.3 263.3 270.8 280.0 264.5 C296.7 258.2 316.3 251.2 330.0 245.5 C343.7 239.8 347.7 235.2 362.0 230.5 C376.3 225.8 407.0 219.7 416.0 217.5" fill="none" stroke="#000" stroke-width="0.6" />
<path d="M232.0 280.0 C236.7 278.7 248.7 272.7 260.0 272.0 C271.3 271.3 293.3 275.3 300.0 276.0" fill="none" stroke="#000" stroke-width="0.8" />
<path d="M290.0 277.0 C296.7 274.5 316.7 266.8 330.0 262.0 C343.3 257.2 358.7 253.0 370.0 248.0 C381.3 243.0 393.3 234.7 398.0 232.0" fill="none" stroke="#000" stroke-width="0.9" />
<path d="M302.0 308.0 C308.3 305.3 327.0 297.0 340.0 292.0 C353.0 287.0 367.3 283.1 380.0 278.0 C392.7 272.9 410.0 264.2 416.0 261.5" fill="none" stroke="#000" stroke-width="0.9" />
<path d="M304.0 278.0 L396.0 235.0 L401.0 248.0 L309.0 290.0Z" fill="none" stroke="#000" stroke-width="0.9" />
<path d="M293.9 286.5 L402.8 240.3" fill="none" stroke="#3535d0" stroke-width="1.05" stroke-dasharray="3.5 2.5"/>
<path d="M295.9 291.5 L405.9 245.2" fill="none" stroke="#3535d0" stroke-width="1.05" stroke-dasharray="3.5 2.5"/>
<path d="M299.4 300.0 L411.2 253.4" fill="none" stroke="#3535d0" stroke-width="1.05" stroke-dasharray="3.5 2.5"/>
<path d="M301.5 305.0 L414.3 258.2" fill="none" stroke="#3535d0" stroke-width="1.05" stroke-dasharray="3.5 2.5"/>
<path d="M252.0 288.3 L263.4 285.2 L286.0 280.0" fill="none" stroke="#000" stroke-width="0.8" />
<path d="M252.0 291.0 L263.4 288.0 L287.0 283.0" fill="none" stroke="#000" stroke-width="0.6" />
<path d="M253.0 297.7 L259.2 298.8 L283.2 311.2 L267.6 312.3 L269.7 321.7 L257.2 320.6 L249.9 313.3 L252.0 305.0Z" fill="#000" stroke="none" stroke-width="1" />
<path d="M297.8 300.8 L303.0 301.9 L313.4 323.8 L283.2 311.2 L299.9 310.2Z" fill="#000" stroke="none" stroke-width="1" />
<path d="M234.0 298.8 C234.4 299.0 235.8 298.8 236.5 300.0 C237.2 301.2 238.2 303.6 238.4 306.0 C238.6 308.4 238.3 313.6 237.5 314.4 C236.7 315.2 234.2 311.6 233.5 311.0" fill="#000" stroke="none" stroke-width="1" />
<path d="M240.5 330.0 L264.5 324.8 L275.0 332.0" fill="none" stroke="#000" stroke-width="0.55" />
<path d="M295.7 330.0 L310.3 325.8" fill="none" stroke="#000" stroke-width="0.55" />
<path d="M286.0 280.0 C287.4 281.0 290.7 281.2 294.7 286.2 C298.7 291.2 304.8 301.0 310.0 310.0 C315.2 319.0 319.8 329.2 326.0 340.0 C332.2 350.8 343.5 369.2 347.0 375.0" fill="none" stroke="#000" stroke-width="1.9" />
<path d="M286.0 280.0 C287.4 281.0 290.7 281.2 294.7 286.2 C298.7 291.2 304.8 301.0 310.0 310.0 C315.2 319.0 319.8 329.2 326.0 340.0 C332.2 350.8 343.5 369.2 347.0 375.0" fill="none" stroke="#fff" stroke-width="0.6" />
<path d="M240.0 312.0 C240.5 314.7 242.0 322.5 243.0 328.0 C244.0 333.5 245.5 342.2 246.0 345.0" fill="none" stroke="#3535d0" stroke-width="1.05" stroke-dasharray="3 2"/>
<path d="M250.0 329.0 C253.3 327.8 263.3 324.5 270.0 322.0 C276.7 319.5 286.7 315.3 290.0 314.0" fill="none" stroke="#3535d0" stroke-width="1.05" stroke-dasharray="3 2"/>
<path d="M304.0 320.0 C306.0 323.0 312.0 332.0 316.0 338.0 C320.0 344.0 324.5 350.7 328.0 356.0 C331.5 361.3 335.5 367.7 337.0 370.0" fill="none" stroke="#3535d0" stroke-width="1.05" stroke-dasharray="3 2"/>
<path d="M288.0 304.0 C289.3 305.3 294.7 310.7 296.0 312.0" fill="none" stroke="#3535d0" stroke-width="1.05" stroke-dasharray="3 2"/>
<path d="M243.5 312.0 C244.0 314.7 245.5 322.5 246.5 328.0 C247.5 333.5 249.0 342.2 249.5 345.0" fill="none" stroke="#3535d0" stroke-width="1.05" stroke-dasharray="3 2"/>
<path d="M250.0 332.5 C253.3 331.3 263.3 328.0 270.0 325.5 C276.7 323.0 286.7 318.8 290.0 317.5" fill="none" stroke="#3535d0" stroke-width="1.05" stroke-dasharray="3 2"/>
<path d="M307.5 320.0 C309.5 323.0 315.5 332.0 319.5 338.0 C323.5 344.0 328.0 350.7 331.5 356.0 C335.0 361.3 339.0 367.7 340.5 370.0" fill="none" stroke="#3535d0" stroke-width="1.05" stroke-dasharray="3 2"/>
<path d="M291.5 304.0 C292.8 305.3 298.2 310.7 299.5 312.0" fill="none" stroke="#3535d0" stroke-width="1.05" stroke-dasharray="3 2"/>
<path d="M273.6 343.8 L298.0 340.6 L320.5 348.1 L293.0 361.9 L280.5 359.4 L286.0 350.6Z" fill="#5cee8a" stroke="#000" stroke-width="0.6" />
<path d="M240.5 330.0 L269.0 326.0 L275.5 333.0 L266.8 340.0 L278.0 350.0" fill="none" stroke="#000" stroke-width="0.55" />
<path d="M228.0 346.0 L276.8 350.0 L248.0 370.0" fill="none" stroke="#000" stroke-width="0.55" />
<path d="M270.5 362.5 L280.5 365.0 L283.0 375.0" fill="none" stroke="#000" stroke-width="0.55" />
<path d="M276.8 350.0 L270.0 362.0" fill="none" stroke="#000" stroke-width="0.55" />
<path d="M295.5 330.0 L308.0 326.2" fill="none" stroke="#000" stroke-width="0.55" />
<path d="M295.5 330.0 L320.5 348.1" fill="none" stroke="#000" stroke-width="0.55" />
<path d="M293.0 361.9 L315.5 370.0 L338.0 365.0" fill="none" stroke="#000" stroke-width="0.55" />
<path d="M320.5 348.1 L335.0 352.0" fill="none" stroke="#000" stroke-width="0.55" />
<path d="M338.0 365.0 L332.0 358.0 L343.0 360.0" fill="none" stroke="#000" stroke-width="0.55" />
<path d="M333.0 301.0 C346.8 294.4 402.2 268.1 416.0 261.5 L464 344.5 L365.5 353.5 Z" fill="url(#mesh)" stroke="#000" stroke-width="1.1" />
<path d="M404.2 237.4 L420.8 237.4 L446.9 250.4 L432.3 252.0 L433.3 262.4 L417.7 257.2 L406.2 239.5Z" fill="#000" stroke="none" stroke-width="1" />
<path d="M460.4 240.0 L472.9 241.5 L493.8 264.0 L475.0 264.5 L447.9 251.4 L462.5 250.4Z" fill="#000" stroke="none" stroke-width="1" />
<path d="M458.3 324.9 L468.8 325.4 L492.7 339.5 L477.0 339.5 L479.2 350.4 L470.8 346.2 L459.4 326.5Z" fill="#000" stroke="none" stroke-width="1" />
<path d="M506.2 328.0 L518.8 330.0 L539.6 352.5 L516.7 352.5 L493.8 340.0 L508.3 339.5Z" fill="#000" stroke="none" stroke-width="1" />
<path d="M440.0 282.5 L462.5 280.0 L482.5 287.5 L460.0 302.5 L445.0 300.0 L448.8 292.5Z" fill="#5cee8a" stroke="#000" stroke-width="0.6" />
<path d="M485.0 370.0 L507.5 367.5 L527.5 375.0 L510.0 385.0 L492.5 382.5Z" fill="#5cee8a" stroke="#000" stroke-width="0.6" />
<path d="M459.4 269.2 L490.0 264.8 L502.0 274.7 L495.5 279.0 L505.0 290.0 L483.0 288.0 L459.4 269.2" fill="none" stroke="#000" stroke-width="0.6" />
<path d="M459.4 304.2 L503.0 307.0 L497.0 296.0 L512.0 293.0 L522.0 300.0 L507.0 306.0 L505.0 314.0 L520.0 318.0 L542.5 317.4 L533.0 305.0 L512.0 293.0" fill="none" stroke="#000" stroke-width="0.6" />
<path d="M483.0 288.0 L500.0 300.0" fill="none" stroke="#000" stroke-width="0.6" />
<path d="M544.7 327.2 L560.0 325.0 L560.0 340.0 L557.8 360.0 L545.0 347.0 L538.0 342.5 L544.7 327.2" fill="none" stroke="#000" stroke-width="0.6" />
<path d="M505.3 355.7 L542.5 351.3 L553.5 360.0 L540.0 368.0 L548.0 377.0 L536.0 386.0 L555.0 390.0" fill="none" stroke="#000" stroke-width="0.6" />
<path d="M553.5 360.0 L575.0 345.0 L600.0 330.0 L620.0 325.0" fill="none" stroke="#000" stroke-width="0.6" />
<path d="M557.8 360.0 L575.0 372.0 L590.0 392.0" fill="none" stroke="#000" stroke-width="0.6" />
<path d="M573.0 351.3 L580.0 337.0 L608.0 320.6 L625.0 318.0" fill="none" stroke="#000" stroke-width="0.6" />
<path d="M542.5 317.4 L550.0 330.0 L544.7 327.2" fill="none" stroke="#000" stroke-width="0.6" />
<path d="M470.0 345.0 L490.0 352.0 L505.0 356.0" fill="none" stroke="#000" stroke-width="0.6" />
<path d="M528.0 376.0 L545.0 372.0" fill="none" stroke="#000" stroke-width="0.6" />
<path d="M500.0 372.0 L515.0 366.0 L528.0 376.0" fill="none" stroke="#000" stroke-width="0.6" />
<path d="M410.0 243.0 C418.0 256.8 445.8 304.8 458.0 326.0 C470.2 347.2 478.8 362.7 483.0 370.0" fill="none" stroke="#3535d0" stroke-width="1.05" stroke-dasharray="3 2.5"/>
<path d="M414.0 241.0 C422.0 254.8 449.8 302.8 462.0 324.0 C474.2 345.2 482.8 360.7 487.0 368.0" fill="none" stroke="#3535d0" stroke-width="1.05" stroke-dasharray="3 2.5"/>
<path d="M462.0 230.0 C469.3 238.0 492.0 263.0 506.0 278.0 C520.0 293.0 539.3 313.0 546.0 320.0" fill="none" stroke="#3535d0" stroke-width="1.05" stroke-dasharray="3 2.5"/>
<path d="M458.0 233.0 C465.3 241.0 488.0 266.0 502.0 281.0 C516.0 296.0 535.3 316.0 542.0 323.0" fill="none" stroke="#3535d0" stroke-width="1.05" stroke-dasharray="3 2.5"/>
<path d="M400.0 230.0 L487.5 385.0" fill="none" stroke="#000" stroke-width="1.9" />
<path d="M400.0 230.0 L487.5 385.0" fill="none" stroke="#fff" stroke-width="0.6" />
<path d="M399.0 229.0 C401.8 226.5 409.2 217.9 416.0 214.0 C422.8 210.1 432.9 205.4 440.0 205.6 C447.1 205.8 452.5 210.3 458.8 215.0 C465.0 219.7 471.2 226.2 477.5 233.8 C483.8 241.2 490.0 251.9 496.2 260.0 C502.5 268.1 508.1 274.4 515.0 282.5 C521.9 290.6 531.0 302.4 537.5 308.8 C544.0 315.1 551.0 318.4 553.8 320.3" fill="none" stroke="#000" stroke-width="1.9" />
<path d="M399.0 229.0 C401.8 226.5 409.2 217.9 416.0 214.0 C422.8 210.1 432.9 205.4 440.0 205.6 C447.1 205.8 452.5 210.3 458.8 215.0 C465.0 219.7 471.2 226.2 477.5 233.8 C483.8 241.2 490.0 251.9 496.2 260.0 C502.5 268.1 508.1 274.4 515.0 282.5 C521.9 290.6 531.0 302.4 537.5 308.8 C544.0 315.1 551.0 318.4 553.8 320.3" fill="none" stroke="#fff" stroke-width="0.6" />
<path d="M553.8 320.3 C561.5 318.6 587.3 312.9 600.0 310.0 C612.7 307.1 620.8 305.0 630.0 303.0 C639.2 301.0 650.8 298.7 655.0 297.8" fill="none" stroke="#000" stroke-width="1.9" />
<path d="M553.8 320.3 C561.5 318.6 587.3 312.9 600.0 310.0 C612.7 307.1 620.8 305.0 630.0 303.0 C639.2 301.0 650.8 298.7 655.0 297.8" fill="none" stroke="#fff" stroke-width="0.6" />
<path d="M606.0 396.0 C605.4 395.4 605.9 397.5 602.5 392.5 C599.1 387.5 589.0 372.6 585.6 366.0 C582.2 359.4 581.6 355.8 581.9 353.0 C582.2 350.2 581.1 351.7 587.5 349.4 C593.9 347.1 608.8 342.3 620.0 339.0 C631.2 335.7 649.2 331.2 655.0 329.7" fill="none" stroke="#000" stroke-width="1.9" />
<path d="M606.0 396.0 C605.4 395.4 605.9 397.5 602.5 392.5 C599.1 387.5 589.0 372.6 585.6 366.0 C582.2 359.4 581.6 355.8 581.9 353.0 C582.2 350.2 581.1 351.7 587.5 349.4 C593.9 347.1 608.8 342.3 620.0 339.0 C631.2 335.7 649.2 331.2 655.0 329.7" fill="none" stroke="#fff" stroke-width="0.6" />
<path d="M600.0 389.0 C597.2 384.5 586.7 368.2 583.0 362.0 C579.3 355.8 578.0 354.7 578.0 352.0 C578.0 349.3 582.2 347.0 583.0 346.0" fill="none" stroke="#3535d0" stroke-width="1.05" stroke-dasharray="3 2.5"/>
<path d="M583.0 346.0 C589.2 344.0 608.0 337.7 620.0 334.0 C632.0 330.3 649.2 325.7 655.0 324.0" fill="none" stroke="#3535d0" stroke-width="1.05" stroke-dasharray="3 2.5"/>
<path d="M606.0 318.4 L630.6 315.6 L652.0 323.0 L627.0 336.0 L613.8 333.4 L617.5 324.0Z" fill="#5cee8a" stroke="#000" stroke-width="0.6" />
<path d="M553.0 328.0 L580.0 322.0 L606.0 318.4" fill="none" stroke="#000" stroke-width="0.55" />
<path d="M617.5 324.0 L604.0 332.0 L600.0 340.0 L585.0 344.0" fill="none" stroke="#000" stroke-width="0.55" />
<path d="M630.6 315.6 L640.0 306.0 L655.0 312.0" fill="none" stroke="#000" stroke-width="0.55" />
<path d="M542.5 307.0 C552.1 305.2 581.2 299.6 600.0 296.0 C618.8 292.4 645.8 287.3 655.0 285.6" fill="none" stroke="#3535d0" stroke-width="1" stroke-dasharray="3.5 3"/>
<path d="M553.8 328.8 C561.5 327.0 583.1 321.6 600.0 318.0 C616.9 314.4 645.8 308.8 655.0 307.0" fill="none" stroke="#3535d0" stroke-width="1" stroke-dasharray="3.5 3"/>
<path d="M570.0 302.0 C576.7 300.0 595.9 294.9 610.0 290.0 C624.1 285.1 647.0 275.4 654.4 272.5" fill="none" stroke="#3535d0" stroke-width="1" stroke-dasharray="3.5 3"/>
<path d="M653.0 293.0 L658.0 293.0 L658.0 300.0 L654.0 300.0Z" fill="#000" stroke="none" stroke-width="1" />
<path d="M433.8 193.8 C436.5 193.8 445.2 192.3 450.0 193.8 C454.8 195.2 459.2 199.3 462.5 202.5 C465.8 205.7 465.2 207.8 470.0 213.0 C474.8 218.2 484.4 227.2 491.0 234.0 C497.6 240.8 503.1 248.8 509.4 253.7 C515.7 258.6 521.5 261.2 529.0 263.5 C536.5 265.8 546.7 267.2 554.5 267.7 C562.3 268.2 569.7 268.4 575.6 266.3 C581.5 264.2 586.2 259.2 589.7 255.0 C593.2 250.8 594.3 244.7 596.8 241.0 C599.2 237.3 601.6 234.2 604.4 232.7 C607.2 231.2 609.1 230.7 613.8 231.9 C618.4 233.1 627.6 237.3 632.5 239.7 C637.4 242.0 641.6 244.9 643.4 246.0 L643.4 246.7 C641.1 246.2 633.0 243.5 629.4 243.6 C625.8 243.7 625.0 243.2 621.6 247.5 C618.2 251.8 614.2 262.4 609.0 269.4 C603.8 276.4 595.9 285.8 590.3 289.7 C584.7 293.6 581.6 293.2 575.6 293.1 C569.6 293.0 561.5 291.5 554.5 288.9 C547.5 286.3 540.9 282.5 533.4 277.6 C525.9 272.7 516.5 264.7 509.4 259.3 C502.3 253.9 497.6 251.1 491.0 245.2 C484.4 239.3 475.8 230.3 470.0 224.0 C464.2 217.7 460.4 210.7 456.0 207.5 C451.6 204.3 448.1 204.6 443.8 205.0 C439.4 205.4 435.0 208.1 430.0 210.0 C425.0 211.9 415.4 217.2 413.8 216.5 C412.1 215.8 416.4 209.8 420.0 206.0 C423.6 202.2 432.8 196.0 435.3 194.0Z" fill="#1010e8" stroke="#000" stroke-width="0.6" />
<path d="M440.0 199.0 C443.7 200.0 455.3 201.2 462.0 205.0 C468.7 208.8 472.1 213.7 480.0 222.0 C487.9 230.3 499.3 246.0 509.4 255.0 C519.5 264.0 529.4 271.0 540.4 276.2 C551.4 281.4 566.8 285.8 575.6 286.0 C584.4 286.2 587.8 283.4 593.4 277.2 C599.0 271.0 604.6 255.2 609.0 249.0 C613.4 242.8 616.1 241.1 620.0 239.7 C623.9 238.3 630.4 240.4 632.5 240.5" fill="none" stroke="#fff" stroke-width="0.7" />
<path d="M643.4 246.0 C644.5 247.0 647.9 247.8 649.7 252.2 C651.5 256.6 653.5 265.5 654.4 272.5 C655.3 279.5 654.4 289.4 655.0 294.4 C655.6 299.4 657.5 294.9 657.8 302.5 C658.1 310.1 657.1 326.2 657.0 340.0 C656.9 353.8 657.0 377.5 657.0 385.0" fill="none" stroke="#000" stroke-width="1.1" />
<path d="M280.5 277.0 L290.5 261.0" fill="none" stroke="#000" stroke-width="0.8" />
<path d="M284.5 278.0 L294.0 262.5" fill="none" stroke="#000" stroke-width="0.8" />
<path d="M343.8 245.0 L352.5 230.0" fill="none" stroke="#000" stroke-width="0.8" />
<path d="M350.0 243.8 L360.0 227.5" fill="none" stroke="#000" stroke-width="0.8" />
<path d="M315.5 256.0 L325.5 247.5" fill="none" stroke="#000" stroke-width="0.8" />
<path d="M318.0 257.0 C316.7 255.3 322.5 249.2 325.0 246.0 C327.5 242.8 330.2 240.0 333.0 237.5 C335.8 235.0 339.2 232.7 342.0 231.0 C344.8 229.3 348.2 227.7 350.0 227.5 C351.8 227.3 353.2 227.9 352.5 230.0 C351.8 232.1 348.1 236.7 346.0 240.0 C343.9 243.3 342.2 247.3 340.0 250.0 C337.8 252.7 336.7 254.8 333.0 256.0 C329.3 257.2 319.3 258.7 318.0 257.0Z" fill="#fff" stroke="#000" stroke-width="1.15" />
<path d="M348.0 246.0 C347.0 244.3 353.3 237.5 356.0 234.0 C358.7 230.5 360.8 227.7 364.0 225.0 C367.2 222.3 371.3 219.9 375.0 218.0 C378.7 216.1 383.8 213.8 386.0 213.5 C388.2 213.2 389.3 213.9 388.0 216.0 C386.7 218.1 381.0 222.7 378.0 226.0 C375.0 229.3 372.7 233.0 370.0 236.0 C367.3 239.0 365.7 242.3 362.0 244.0 C358.3 245.7 349.0 247.7 348.0 246.0Z" fill="#fff" stroke="#000" stroke-width="1.15" />
<path d="M370.0 232.0 C369.0 230.2 375.0 225.5 378.0 222.0 C381.0 218.5 385.0 213.7 388.0 211.0 C391.0 208.3 393.5 207.2 396.0 206.0 C398.5 204.8 401.5 203.3 403.0 203.5 C404.5 203.7 405.8 204.9 405.0 207.0 C404.2 209.1 400.5 212.8 398.0 216.0 C395.5 219.2 392.3 223.2 390.0 226.0 C387.7 228.8 387.3 232.0 384.0 233.0 C380.7 234.0 371.0 233.8 370.0 232.0Z" fill="#fff" stroke="#000" stroke-width="1.15" />
<path d="M402.0 216.0 C400.9 213.9 403.2 206.2 405.3 202.5 C407.4 198.8 411.2 196.5 414.7 194.0 C418.1 191.5 423.3 188.3 426.0 187.5 C428.7 186.7 430.4 188.2 431.0 189.0 C431.6 189.8 429.2 190.4 429.7 192.2 C430.2 194.0 432.8 198.2 434.0 199.7 C435.2 201.2 438.5 199.6 437.0 201.0 C435.5 202.4 429.2 205.7 425.0 208.0 C420.8 210.3 415.8 213.7 412.0 215.0 C408.2 216.3 403.1 218.1 402.0 216.0Z" fill="#fff" stroke="#000" stroke-width="1.15" />
<path d="M235.5 274.0 C236.0 270.9 238.1 272.0 240.0 271.5 C241.9 271.0 245.2 269.8 247.0 271.0 C248.8 272.2 249.8 275.0 250.5 279.0 C251.2 283.0 250.8 289.8 251.0 295.0 C251.2 300.2 252.4 307.0 252.0 310.0 C251.6 313.0 250.3 313.3 248.6 313.0 C246.9 312.7 243.9 311.8 242.0 308.0 C240.1 304.2 238.1 295.7 237.0 290.0 C235.9 284.3 235.0 277.1 235.5 274.0Z" fill="#fff" stroke="#000" stroke-width="1.15" />
<path d="M257.0 266.0 C257.2 263.3 260.8 264.2 263.0 264.0 C265.2 263.8 268.8 263.7 270.5 265.0 C272.2 266.3 272.1 268.2 273.5 272.0 C274.9 275.8 277.4 283.5 279.0 288.0 C280.6 292.5 283.2 296.7 283.0 299.0 C282.8 301.3 279.3 301.8 278.0 302.0 C276.7 302.2 276.7 302.0 275.0 300.0 C273.3 298.0 270.2 293.3 268.0 290.0 C265.8 286.7 263.3 284.0 261.5 280.0 C259.7 276.0 256.8 268.7 257.0 266.0Z" fill="#fff" stroke="#000" stroke-width="1.15" />
<path d="M290.5 252.5 C290.7 250.7 293.9 249.8 296.0 249.0 C298.1 248.2 300.2 246.7 303.0 247.5 C305.8 248.3 310.5 251.1 313.0 254.0 C315.5 256.9 316.5 261.3 318.0 265.0 C319.5 268.7 321.8 273.8 321.8 276.0 C321.8 278.2 319.5 278.0 318.0 278.0 C316.5 278.0 315.0 277.3 313.0 276.0 C311.0 274.7 309.0 272.7 306.0 270.0 C303.0 267.3 297.6 262.9 295.0 260.0 C292.4 257.1 290.3 254.3 290.5 252.5Z" fill="#fff" stroke="#000" stroke-width="1.15" />
<path d="M342.0 245.3 L360.3 224.5 L366.0 222.0 L348.7 246.2Z" fill="#fff" stroke="#000" stroke-width="0.9" />
<path d="M372.0 231.0 L380.3 222.0 L386.0 221.0 L382.0 232.0Z" fill="#fff" stroke="#000" stroke-width="0.9" />
<path d="M329.5 259.5 C329.8 258.1 329.7 253.3 331.2 251.2 C332.7 249.0 335.8 247.3 338.7 246.6 C341.6 245.9 345.9 246.0 348.7 247.0 C351.5 248.0 354.1 250.7 355.3 252.8 C356.6 254.9 356.4 257.8 356.2 259.5 C356.0 261.2 354.4 262.4 354.0 263.0 L353.7 262.0 C352.6 261.4 349.5 259.5 347.0 258.7 C344.5 257.9 341.1 257.1 338.7 257.0 C336.3 256.9 334.3 257.4 332.8 257.8 C331.3 258.2 330.1 259.2 329.5 259.5Z" fill="#fff" stroke="#000" stroke-width="1.15" />
<path d="M363.7 243.7 C364.2 242.3 365.1 237.3 367.0 235.3 C368.9 233.3 372.5 232.0 375.3 231.6 C378.1 231.2 381.3 231.6 383.7 232.8 C386.1 234.0 388.4 236.5 389.5 238.7 C390.6 240.9 390.6 244.4 390.3 246.2 C390.1 248.0 388.4 248.9 388.0 249.5 L387.0 248.7 C385.2 247.9 378.9 244.8 376.0 243.7 C373.1 242.6 371.3 242.5 369.5 242.4 C367.7 242.3 366.0 242.8 365.0 243.0 C364.0 243.2 363.9 243.6 363.7 243.7Z" fill="#fff" stroke="#000" stroke-width="1.15" />
<path d="M396.0 227.5 C396.2 226.2 396.2 221.9 397.5 220.0 C398.8 218.1 401.4 216.7 404.0 216.0 C406.6 215.3 410.3 215.3 413.0 216.0 C415.7 216.7 418.2 218.2 420.0 220.0 C421.8 221.8 423.0 224.8 423.5 227.0 C424.0 229.2 423.1 232.0 423.0 233.0 L419.4 232.0 C418.3 231.4 415.2 229.3 413.0 228.5 C410.8 227.7 408.3 227.1 406.0 227.0 C403.7 226.9 400.7 227.9 399.0 228.0 C397.3 228.1 396.5 227.6 396.0 227.5Z" fill="#fff" stroke="#000" stroke-width="1.15" />
<ellipse cx="248.5" cy="312" rx="3" ry="2" fill="#777" stroke="#000" stroke-width="1.6"/>
<ellipse cx="278.6" cy="301.5" rx="3" ry="2" fill="#777" stroke="#000" stroke-width="1.6"/>
<ellipse cx="319" cy="277.5" rx="3" ry="2" fill="#777" stroke="#000" stroke-width="1.6"/>
<ellipse cx="352" cy="263.5" rx="3" ry="2" fill="#777" stroke="#000" stroke-width="1.6"/>
<ellipse cx="386" cy="249.5" rx="3" ry="2" fill="#777" stroke="#000" stroke-width="1.6"/>
<ellipse cx="421" cy="234" rx="3" ry="2" fill="#777" stroke="#000" stroke-width="1.6"/>
<ellipse cx="439" cy="226.5" rx="3" ry="2" fill="#fff" stroke="#000" stroke-width="1.2"/></svg>
</body></html>
